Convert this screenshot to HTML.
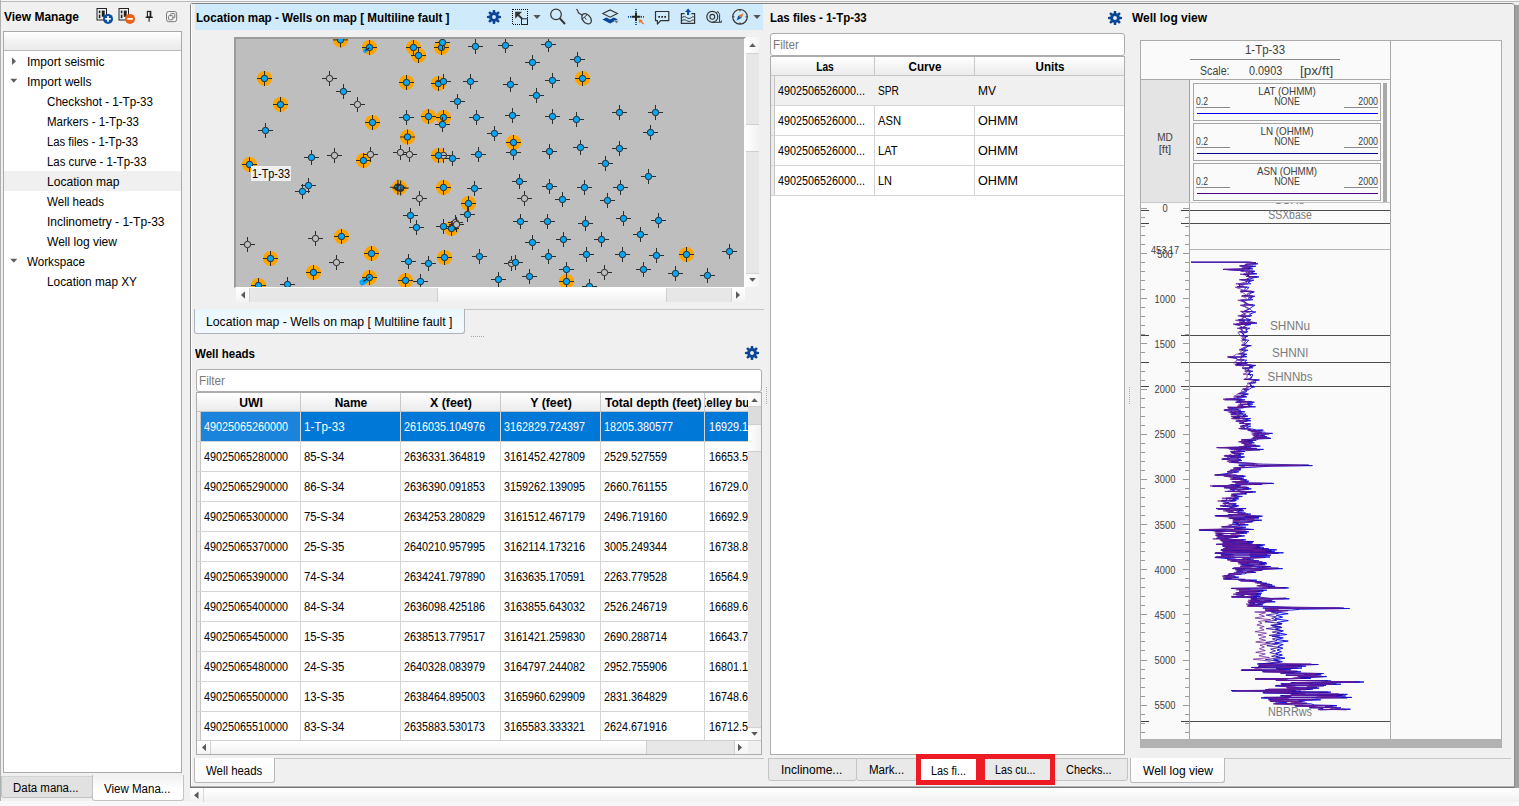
<!DOCTYPE html>
<html lang="en"><head><meta charset="utf-8"><title>View Manager</title>
<style>
html,body{margin:0;padding:0;}
body{width:1519px;height:806px;overflow:hidden;background:#f0f0f0;position:relative;
 font-family:"Liberation Sans",sans-serif;font-size:12px;color:#000;}
#root{position:absolute;left:0;top:0;width:1519px;height:806px;overflow:hidden;}
#root div,#root span.t,#root svg{position:absolute;box-sizing:border-box;}
span.t{white-space:pre;font-size:12px;}
.b{font-weight:bold;}
.s11{font-size:11px !important;}
.s10{font-size:10.5px !important;}
.w{color:#fff;}
.g{color:#7a7a7a;}
.dg{color:#404040;}
.clip{overflow:hidden;}
</style></head>
<body><div id="root">
<div style="left:0px;top:0px;width:1519px;height:1px;background:#f6f6f6;"></div>
<div style="left:0px;top:1px;width:1519px;height:1px;background:#b9b9b9;"></div>
<div style="left:0px;top:0px;width:1px;height:802px;background:#b0b0b0;"></div>
<span id="t1" class="t b" style="top:9px;line-height:16px;left:4px;transform-origin:0 50%;transform:scaleX(0.9981);">View Manage</span>
<div style="left:3px;top:31px;width:179px;height:742px;background:#fff;border:1px solid #a9a9a9;"></div>
<div style="left:4px;top:32px;width:177px;height:19px;background:linear-gradient(#fff,#f1f1f1 60%,#ebebeb);border-bottom:1px solid #b9b9b9;"></div>
<div style="left:4px;top:171px;width:177px;height:20px;background:#f0f0f0;"></div>
<span id="t2" class="t " style="top:54px;line-height:16px;left:27.3px;transform-origin:0 50%;transform:scaleX(1.0020);">Import seismic</span>
<span id="t3" class="t " style="top:74px;line-height:16px;left:27.3px;transform-origin:0 50%;transform:scaleX(1.0076);">Import wells</span>
<span id="t4" class="t " style="top:94px;line-height:16px;left:47.3px;transform-origin:0 50%;transform:scaleX(0.9690);">Checkshot - 1-Tp-33</span>
<span id="t5" class="t " style="top:114px;line-height:16px;left:47.3px;transform-origin:0 50%;transform:scaleX(0.9580);">Markers - 1-Tp-33</span>
<span id="t6" class="t " style="top:134px;line-height:16px;left:47.3px;transform-origin:0 50%;transform:scaleX(0.9410);">Las files - 1-Tp-33</span>
<span id="t7" class="t " style="top:154px;line-height:16px;left:47.3px;transform-origin:0 50%;transform:scaleX(0.9502);">Las curve - 1-Tp-33</span>
<span id="t8" class="t " style="top:174px;line-height:16px;left:47.3px;transform-origin:0 50%;transform:scaleX(1.0063);">Location map</span>
<span id="t9" class="t " style="top:194px;line-height:16px;left:47.3px;transform-origin:0 50%;transform:scaleX(0.9635);">Well heads</span>
<span id="t10" class="t " style="top:214px;line-height:16px;left:47.3px;transform-origin:0 50%;transform:scaleX(1.0011);">Inclinometry - 1-Tp-33</span>
<span id="t11" class="t " style="top:234px;line-height:16px;left:47.3px;transform-origin:0 50%;transform:scaleX(1.0027);">Well log view</span>
<span id="t12" class="t " style="top:254px;line-height:16px;left:27.3px;transform-origin:0 50%;transform:scaleX(0.9697);">Workspace</span>
<span id="t13" class="t " style="top:274px;line-height:16px;left:47.3px;transform-origin:0 50%;transform:scaleX(0.9848);">Location map XY</span>
<svg style="left:0;top:50px;width:30px;height:230px" viewBox="0 0 30 230"><path d="M12 7.5 L16 11.3 L12 15 Z" fill="#5f5f5f"/><path d="M10.3 28.8 L17.3 28.8 L13.8 32.8 Z" fill="#5f5f5f"/><path d="M10.3 208.8 L17.3 208.8 L13.8 212.8 Z" fill="#5f5f5f"/></svg>
<div style="left:1px;top:776px;width:92px;height:22px;background:#e1e1e1;border:1px solid #c3c3c3;border-top:1px solid #d2d2d2;border-radius:0 0 3px 3px;"></div>
<div style="left:92px;top:775px;width:92px;height:26px;background:linear-gradient(#f1f1f1,#fff 60%);border:1px solid #c3c3c3;border-top:none;border-radius:0 0 3px 3px;"></div>
<span id="t14" class="t " style="top:780px;line-height:16px;left:13.3px;transform-origin:0 50%;transform:scaleX(0.9534);">Data mana...</span>
<span id="t15" class="t " style="top:781px;line-height:16px;left:104.2px;transform-origin:0 50%;transform:scaleX(0.9616);">View Mana...</span>
<div style="left:0px;top:801px;width:1519px;height:5px;background:#f7f7f7;"></div>
<div style="left:190px;top:3px;width:1325px;height:785px;border:1px solid #858585;border-bottom:2px solid #757575;border-right:none;border-radius:3px 4px 0 0;"></div>
<div style="left:191px;top:4px;width:1px;height:782px;background:#fff;"></div>
<div style="left:1514px;top:5px;width:5px;height:783px;background:#a0a0a0;border-left:1px solid #8c8c8c;"></div>
<div style="left:191px;top:786px;width:1323px;height:1px;background:#b4b4b4;"></div>
<div style="left:190px;top:788px;width:1329px;height:14px;background:linear-gradient(#fefefe,#f8f8f8 50%,#f1f1f1);"></div>
<div style="left:203px;top:788px;width:1px;height:14px;background:#d9d9d9;"></div>
<svg style="left:191px;top:788px;width:12px;height:15px" viewBox="0 0 12 15"><path d="M7.5 3.5 L7.5 11 L3 7.2 Z" fill="#5a5a5a"/></svg>
<div style="left:195px;top:4px;width:568px;height:26px;background:#cfeafb;"></div>
<span id="t16" class="t b" style="top:10px;line-height:16px;left:195.6px;transform-origin:0 50%;transform:scaleX(0.9708);">Location map - Wells on map [ Multiline fault ]</span>
<svg style="left:484.7px;top:8.2px;width:18px;height:18px" viewBox="-9 -9 18 18"><g fill="#0b4596"><circle cx="0" cy="0" r="4.7"/><path d="M-1.5 -4 L-1.1 -7.05 L1.1 -7.05 L1.5 -4 Z" transform="rotate(0)"/><path d="M-1.5 -4 L-1.1 -7.05 L1.1 -7.05 L1.5 -4 Z" transform="rotate(45)"/><path d="M-1.5 -4 L-1.1 -7.05 L1.1 -7.05 L1.5 -4 Z" transform="rotate(90)"/><path d="M-1.5 -4 L-1.1 -7.05 L1.1 -7.05 L1.5 -4 Z" transform="rotate(135)"/><path d="M-1.5 -4 L-1.1 -7.05 L1.1 -7.05 L1.5 -4 Z" transform="rotate(180)"/><path d="M-1.5 -4 L-1.1 -7.05 L1.1 -7.05 L1.5 -4 Z" transform="rotate(225)"/><path d="M-1.5 -4 L-1.1 -7.05 L1.1 -7.05 L1.5 -4 Z" transform="rotate(270)"/><path d="M-1.5 -4 L-1.1 -7.05 L1.1 -7.05 L1.5 -4 Z" transform="rotate(315)"/></g><circle cx="0" cy="0" r="1.95" fill="#cfeafb"/></svg>
<svg style="left:94px;top:4px;width:90px;height:24px" viewBox="94 4 90 24" ><rect x="97.0" y="8.5" width="9.5" height="11.5" fill="#f0f0f0" stroke="#222" stroke-width="1"/><rect x="98.8" y="10.6" width="1.6" height="2.6" fill="#222"/><rect x="98.8" y="14.6" width="1.6" height="3.6" fill="#222"/><rect x="101.8" y="10.6" width="2.9" height="6.2" fill="#222"/><circle cx="108" cy="18.9" r="5" fill="#0a4ea0"/><path d="M105.2 18.9h5.6M108 16.1v5.6" stroke="#fff" stroke-width="1.7"/><rect x="119.0" y="8.5" width="9.5" height="11.5" fill="#f0f0f0" stroke="#222" stroke-width="1"/><rect x="120.8" y="10.6" width="1.6" height="2.6" fill="#222"/><rect x="120.8" y="14.6" width="1.6" height="3.6" fill="#222"/><rect x="123.8" y="10.6" width="2.9" height="6.2" fill="#222"/><circle cx="130" cy="18.9" r="5" fill="#e8601a"/><path d="M127.2 18.9h5.6" stroke="#fff" stroke-width="1.7"/><rect x="147.4" y="11.4" width="3.4" height="5.6" fill="#f0f0f0" stroke="#1a1a1a" stroke-width="1.1"/><rect x="149.6" y="11.4" width="1.4" height="5.6" fill="#1a1a1a"/><path d="M145.6 17.3h7.2" stroke="#1a1a1a" stroke-width="1.3"/><path d="M149.1 17.3v4.4" stroke="#1a1a1a" stroke-width="1.1"/><rect x="166.5" y="11.5" width="10.2" height="10.2" rx="2.2" fill="none" stroke="#7a7a7a" stroke-width="1"/><rect x="170.6" y="13.6" width="4.2" height="4.2" rx="0.8" fill="none" stroke="#7a7a7a" stroke-width="1"/><rect x="168.6" y="15.6" width="4.2" height="4.2" rx="0.8" fill="#f0f0f0" stroke="#7a7a7a" stroke-width="1"/></svg>
<svg style="left:505px;top:4px;width:258px;height:26px" viewBox="505 4 258 26" ><path d="M513 9.5H528M513 24.5H521M512.5 9V25M527.5 9V19" fill="none" stroke="#000" stroke-width="1" stroke-dasharray="1 1"/><path d="M515.2 11.8 L522 11.8 L515.2 18.7 Z" fill="#333"/><path d="M518.3 15 L522.3 19" stroke="#333" stroke-width="1.8"/><rect x="521.5" y="18.8" width="6" height="5.7" fill="#cfeafb" stroke="#222" stroke-width="1"/><path d="M533.3 15 L540.7 15 L537 18.9 Z" fill="#555"/><circle cx="556" cy="14.4" r="5.3" fill="none" stroke="#333" stroke-width="1.2"/><path d="M559.8 18.3 L565 24" stroke="#333" stroke-width="2"/><path d="M576.3 9.3 C578.8 9.6 577.2 12.6 579.2 13.4 C580.6 14 581.6 14.6 582.8 15.4" fill="none" stroke="#3c3c3c" stroke-width="1.2"/><ellipse cx="586.6" cy="18.8" rx="3.9" ry="5.8" transform="rotate(-40 586.6 18.8)" fill="none" stroke="#3c3c3c" stroke-width="1.3"/><path d="M581.6 19.4 L587.4 14.6 M584.4 17 L586.4 19.6" stroke="#3c3c3c" stroke-width="1" fill="none"/><path d="M602.4 19.5 L610.1 15.6 L617.8 19.5 L610.1 23.6 Z" fill="#0a4596"/><path d="M601.4 13.4 L610.1 9.2 L618.8 13.4 L610.1 18.2 Z" fill="#cfeafb" stroke="#cfeafb" stroke-width="2.2"/><path d="M602.8 13.4 L610.1 9.9 L617.4 13.4 L610.1 17.2 Z" fill="#cfeafb" stroke="#333" stroke-width="1.1"/><path d="M614 20.8 L618.8 20.8 L616.4 23.6 Z" fill="#666" stroke="#cfeafb" stroke-width="0.5"/><path d="M631.6 16.8H640.4M636 12.6V21" stroke="#222" stroke-width="2"/><path d="M628 16.8H631M641 16.8H644M636 9V12M636 22V25" stroke="#0b4fa8" stroke-width="1.8" stroke-dasharray="1 1"/><path d="M638.6 19.2 L642.8 19.9 L641.6 21.1 L644 23.5 L643 24.5 L640.6 22.1 L639.4 23.3 Z" fill="#f07020"/><path d="M655.5 11.5 H668.8 V20.6 H660.6 L657.4 24 V20.6 H655.5 Z" fill="none" stroke="#333" stroke-width="1.2" stroke-linejoin="round"/><rect x="658.3" y="16" width="1.7" height="1.7" fill="#222"/><rect x="661.3" y="16" width="1.7" height="1.7" fill="#222"/><rect x="664.3" y="16" width="1.7" height="1.7" fill="#222"/><path d="M684.6 13.6 H681.4 V23.4 H694.6 V13.6 H691.4" fill="none" stroke="#333" stroke-width="1.2"/><path d="M681.6 17.8 C683.6 16.2 685 16.4 686.6 17.6 C688.4 19 690.2 18.6 691.6 17.4 C692.8 16.4 693.8 16.8 694.6 17.4" fill="none" stroke="#333" stroke-width="1"/><path d="M681.6 20.8 C683.6 19.4 685 19.6 686.6 20.6 C688.4 21.8 690.2 21.6 691.6 20.6 C692.8 19.8 693.8 20 694.6 20.4" fill="none" stroke="#333" stroke-width="1"/><path d="M688.1 8.6 L691.2 12 H689.2 V15 H687 V12 H685 Z" fill="#0b4fa8"/><circle cx="712.3" cy="16.8" r="5.5" fill="none" stroke="#333" stroke-width="1.2"/><circle cx="712.3" cy="16.8" r="2.4" fill="none" stroke="#333" stroke-width="1.1"/><path d="M712.3 22.3 H721.4 V20.6 M716.4 12.4 L718 11.6 L719.6 14.4 V22" fill="none" stroke="#333" stroke-width="1"/><circle cx="740" cy="16.8" r="7.3" fill="none" stroke="#333" stroke-width="1.2"/><path d="M740 9.6v1.6M740 22.4v1.6M732.8 16.8h1.6M745.6 16.8h1.6" stroke="#333" stroke-width="1.1"/><path d="M743.4 13.2 L741.6 18.2 L738.6 15.6 Z" fill="#f07020"/><path d="M736.6 20.4 L738.4 15.4 L741.4 18 Z" fill="#0b4fa8"/><path d="M753.3 15 L760.7 15 L757 18.9 Z" fill="#555"/></svg>
<div style="left:234px;top:37px;width:512px;height:251px;background:#bebebe;border-left:2px solid #9b9b9b;border-top:2px solid #9b9b9b;border-right:2px solid #fff;border-bottom:1px solid #fff;"></div>
<svg style="left:236px;top:39px;width:508px;height:248px" viewBox="236 39 508 248"><circle cx="340.5" cy="39.9" r="7.6" fill="#ffa500"/><circle cx="413.5" cy="47.5" r="7.6" fill="#ffa500"/><circle cx="418.5" cy="55.5" r="7.6" fill="#ffa500"/><circle cx="264.5" cy="78.5" r="7.6" fill="#ffa500"/><circle cx="280.5" cy="104.5" r="7.6" fill="#ffa500"/><circle cx="406.5" cy="82.5" r="7.6" fill="#ffa500"/><circle cx="372.5" cy="122.5" r="7.6" fill="#ffa500"/><circle cx="428.5" cy="116.5" r="7.6" fill="#ffa500"/><circle cx="407.5" cy="137.0" r="7.6" fill="#ffa500"/><circle cx="441.5" cy="47.5" r="7.6" fill="#ffa500"/><circle cx="438.5" cy="83.5" r="7.6" fill="#ffa500"/><circle cx="582.5" cy="78.5" r="7.6" fill="#ffa500"/><circle cx="443.5" cy="117.5" r="7.6" fill="#ffa500"/><circle cx="513.5" cy="142.5" r="7.6" fill="#ffa500"/><circle cx="249.5" cy="164.5" r="7.6" fill="#ffa500"/><circle cx="363.5" cy="160.5" r="7.6" fill="#ffa500"/><circle cx="341.5" cy="236.5" r="7.6" fill="#ffa500"/><circle cx="438.5" cy="155.5" r="7.6" fill="#ffa500"/><circle cx="443.5" cy="187.5" r="7.6" fill="#ffa500"/><circle cx="468.5" cy="203.5" r="7.6" fill="#ffa500"/><circle cx="451.5" cy="228.5" r="7.6" fill="#ffa500"/><circle cx="270.5" cy="258.5" r="7.6" fill="#ffa500"/><circle cx="371.5" cy="253.5" r="7.6" fill="#ffa500"/><circle cx="313.5" cy="272.5" r="7.6" fill="#ffa500"/><circle cx="405.5" cy="280.5" r="7.6" fill="#ffa500"/><circle cx="258.5" cy="285.5" r="7.6" fill="#ffa500"/><circle cx="444.5" cy="257.5" r="7.6" fill="#ffa500"/><circle cx="566.5" cy="281.5" r="7.6" fill="#ffa500"/><circle cx="686.5" cy="254.5" r="7.6" fill="#ffa500"/><circle cx="369.5" cy="47.5" r="7.6" fill="#ffa500"/><circle cx="369.5" cy="277.5" r="7.6" fill="#ffa500"/><circle cx="399.5" cy="187.5" r="7.6" fill="#ffa500"/><g transform="translate(329.5 78.5)"><path d="M-7.5 0H7.5M0 -7.5V7.5" stroke="#2b2b2b" stroke-width="1" fill="none"/><circle r="3.2" fill="#bebebe" stroke="#2b2b2b" stroke-width="1"/></g><g transform="translate(357.5 104.5)"><path d="M-7.5 0H7.5M0 -7.5V7.5" stroke="#2b2b2b" stroke-width="1" fill="none"/><circle r="3.2" fill="#bebebe" stroke="#2b2b2b" stroke-width="1"/></g><g transform="translate(334.5 155.5)"><path d="M-7.5 0H7.5M0 -7.5V7.5" stroke="#2b2b2b" stroke-width="1" fill="none"/><circle r="3.2" fill="#bebebe" stroke="#2b2b2b" stroke-width="1"/></g><g transform="translate(370.5 154.5)"><path d="M-7.5 0H7.5M0 -7.5V7.5" stroke="#2b2b2b" stroke-width="1" fill="none"/><circle r="3.2" fill="#bebebe" stroke="#2b2b2b" stroke-width="1"/></g><g transform="translate(400.5 152.5)"><path d="M-7.5 0H7.5M0 -7.5V7.5" stroke="#2b2b2b" stroke-width="1" fill="none"/><circle r="3.2" fill="#bebebe" stroke="#2b2b2b" stroke-width="1"/></g><g transform="translate(409.5 154.5)"><path d="M-7.5 0H7.5M0 -7.5V7.5" stroke="#2b2b2b" stroke-width="1" fill="none"/><circle r="3.2" fill="#bebebe" stroke="#2b2b2b" stroke-width="1"/></g><g transform="translate(419.5 198.5)"><path d="M-7.5 0H7.5M0 -7.5V7.5" stroke="#2b2b2b" stroke-width="1" fill="none"/><circle r="3.2" fill="#bebebe" stroke="#2b2b2b" stroke-width="1"/></g><g transform="translate(315.5 238.5)"><path d="M-7.5 0H7.5M0 -7.5V7.5" stroke="#2b2b2b" stroke-width="1" fill="none"/><circle r="3.2" fill="#bebebe" stroke="#2b2b2b" stroke-width="1"/></g><g transform="translate(443.5 155.5)"><path d="M-7.5 0H7.5M0 -7.5V7.5" stroke="#2b2b2b" stroke-width="1" fill="none"/><circle r="3.2" fill="#bebebe" stroke="#2b2b2b" stroke-width="1"/></g><g transform="translate(524.5 198.5)"><path d="M-7.5 0H7.5M0 -7.5V7.5" stroke="#2b2b2b" stroke-width="1" fill="none"/><circle r="3.2" fill="#bebebe" stroke="#2b2b2b" stroke-width="1"/></g><g transform="translate(455.5 222.5)"><path d="M-7.5 0H7.5M0 -7.5V7.5" stroke="#2b2b2b" stroke-width="1" fill="none"/><circle r="3.2" fill="#bebebe" stroke="#2b2b2b" stroke-width="1"/></g><g transform="translate(456.5 224.5)"><path d="M-7.5 0H7.5M0 -7.5V7.5" stroke="#2b2b2b" stroke-width="1" fill="none"/><circle r="3.2" fill="#bebebe" stroke="#2b2b2b" stroke-width="1"/></g><g transform="translate(247.5 244.5)"><path d="M-7.5 0H7.5M0 -7.5V7.5" stroke="#2b2b2b" stroke-width="1" fill="none"/><circle r="3.2" fill="#bebebe" stroke="#2b2b2b" stroke-width="1"/></g><g transform="translate(336.5 262.5)"><path d="M-7.5 0H7.5M0 -7.5V7.5" stroke="#2b2b2b" stroke-width="1" fill="none"/><circle r="3.2" fill="#bebebe" stroke="#2b2b2b" stroke-width="1"/></g><g transform="translate(511.5 263.5)"><path d="M-7.5 0H7.5M0 -7.5V7.5" stroke="#2b2b2b" stroke-width="1" fill="none"/><circle r="3.2" fill="#bebebe" stroke="#2b2b2b" stroke-width="1"/></g><g transform="translate(604.5 272.5)"><path d="M-7.5 0H7.5M0 -7.5V7.5" stroke="#2b2b2b" stroke-width="1" fill="none"/><circle r="3.2" fill="#bebebe" stroke="#2b2b2b" stroke-width="1"/></g><g transform="translate(340.5 39.9)"><path d="M-7.5 0H7.5M0 -7.5V7.5" stroke="#2b2b2b" stroke-width="1" fill="none"/><circle r="3.2" fill="#05a8f8" stroke="#2b2b2b" stroke-width="1"/></g><g transform="translate(413.5 47.5)"><path d="M-7.5 0H7.5M0 -7.5V7.5" stroke="#2b2b2b" stroke-width="1" fill="none"/><circle r="3.2" fill="#05a8f8" stroke="#2b2b2b" stroke-width="1"/></g><g transform="translate(418.5 55.5)"><path d="M-7.5 0H7.5M0 -7.5V7.5" stroke="#2b2b2b" stroke-width="1" fill="none"/><circle r="3.2" fill="#05a8f8" stroke="#2b2b2b" stroke-width="1"/></g><g transform="translate(264.5 78.5)"><path d="M-7.5 0H7.5M0 -7.5V7.5" stroke="#2b2b2b" stroke-width="1" fill="none"/><circle r="3.2" fill="#05a8f8" stroke="#2b2b2b" stroke-width="1"/></g><g transform="translate(280.5 104.5)"><path d="M-7.5 0H7.5M0 -7.5V7.5" stroke="#2b2b2b" stroke-width="1" fill="none"/><circle r="3.2" fill="#05a8f8" stroke="#2b2b2b" stroke-width="1"/></g><g transform="translate(406.5 82.5)"><path d="M-7.5 0H7.5M0 -7.5V7.5" stroke="#2b2b2b" stroke-width="1" fill="none"/><circle r="3.2" fill="#05a8f8" stroke="#2b2b2b" stroke-width="1"/></g><g transform="translate(372.5 122.5)"><path d="M-7.5 0H7.5M0 -7.5V7.5" stroke="#2b2b2b" stroke-width="1" fill="none"/><circle r="3.2" fill="#05a8f8" stroke="#2b2b2b" stroke-width="1"/></g><g transform="translate(428.5 116.5)"><path d="M-7.5 0H7.5M0 -7.5V7.5" stroke="#2b2b2b" stroke-width="1" fill="none"/><circle r="3.2" fill="#05a8f8" stroke="#2b2b2b" stroke-width="1"/></g><g transform="translate(407.5 137.0)"><path d="M-7.5 0H7.5M0 -7.5V7.5" stroke="#2b2b2b" stroke-width="1" fill="none"/><circle r="3.2" fill="#05a8f8" stroke="#2b2b2b" stroke-width="1"/></g><g transform="translate(441.5 47.5)"><path d="M-7.5 0H7.5M0 -7.5V7.5" stroke="#2b2b2b" stroke-width="1" fill="none"/><circle r="3.2" fill="#05a8f8" stroke="#2b2b2b" stroke-width="1"/></g><g transform="translate(438.5 83.5)"><path d="M-7.5 0H7.5M0 -7.5V7.5" stroke="#2b2b2b" stroke-width="1" fill="none"/><circle r="3.2" fill="#05a8f8" stroke="#2b2b2b" stroke-width="1"/></g><g transform="translate(582.5 78.5)"><path d="M-7.5 0H7.5M0 -7.5V7.5" stroke="#2b2b2b" stroke-width="1" fill="none"/><circle r="3.2" fill="#05a8f8" stroke="#2b2b2b" stroke-width="1"/></g><g transform="translate(443.5 117.5)"><path d="M-7.5 0H7.5M0 -7.5V7.5" stroke="#2b2b2b" stroke-width="1" fill="none"/><circle r="3.2" fill="#05a8f8" stroke="#2b2b2b" stroke-width="1"/></g><g transform="translate(513.5 142.5)"><path d="M-7.5 0H7.5M0 -7.5V7.5" stroke="#2b2b2b" stroke-width="1" fill="none"/><circle r="3.2" fill="#05a8f8" stroke="#2b2b2b" stroke-width="1"/></g><g transform="translate(249.5 164.5)"><path d="M-7.5 0H7.5M0 -7.5V7.5" stroke="#2b2b2b" stroke-width="1" fill="none"/><circle r="3.2" fill="#05a8f8" stroke="#2b2b2b" stroke-width="1"/></g><g transform="translate(363.5 160.5)"><path d="M-7.5 0H7.5M0 -7.5V7.5" stroke="#2b2b2b" stroke-width="1" fill="none"/><circle r="3.2" fill="#05a8f8" stroke="#2b2b2b" stroke-width="1"/></g><g transform="translate(341.5 236.5)"><path d="M-7.5 0H7.5M0 -7.5V7.5" stroke="#2b2b2b" stroke-width="1" fill="none"/><circle r="3.2" fill="#05a8f8" stroke="#2b2b2b" stroke-width="1"/></g><g transform="translate(438.5 155.5)"><path d="M-7.5 0H7.5M0 -7.5V7.5" stroke="#2b2b2b" stroke-width="1" fill="none"/><circle r="3.2" fill="#05a8f8" stroke="#2b2b2b" stroke-width="1"/></g><g transform="translate(443.5 187.5)"><path d="M-7.5 0H7.5M0 -7.5V7.5" stroke="#2b2b2b" stroke-width="1" fill="none"/><circle r="3.2" fill="#05a8f8" stroke="#2b2b2b" stroke-width="1"/></g><g transform="translate(468.5 203.5)"><path d="M-7.5 0H7.5M0 -7.5V7.5" stroke="#2b2b2b" stroke-width="1" fill="none"/><circle r="3.2" fill="#05a8f8" stroke="#2b2b2b" stroke-width="1"/></g><g transform="translate(451.5 228.5)"><path d="M-7.5 0H7.5M0 -7.5V7.5" stroke="#2b2b2b" stroke-width="1" fill="none"/><circle r="3.2" fill="#05a8f8" stroke="#2b2b2b" stroke-width="1"/></g><g transform="translate(270.5 258.5)"><path d="M-7.5 0H7.5M0 -7.5V7.5" stroke="#2b2b2b" stroke-width="1" fill="none"/><circle r="3.2" fill="#05a8f8" stroke="#2b2b2b" stroke-width="1"/></g><g transform="translate(371.5 253.5)"><path d="M-7.5 0H7.5M0 -7.5V7.5" stroke="#2b2b2b" stroke-width="1" fill="none"/><circle r="3.2" fill="#05a8f8" stroke="#2b2b2b" stroke-width="1"/></g><g transform="translate(313.5 272.5)"><path d="M-7.5 0H7.5M0 -7.5V7.5" stroke="#2b2b2b" stroke-width="1" fill="none"/><circle r="3.2" fill="#05a8f8" stroke="#2b2b2b" stroke-width="1"/></g><g transform="translate(405.5 280.5)"><path d="M-7.5 0H7.5M0 -7.5V7.5" stroke="#2b2b2b" stroke-width="1" fill="none"/><circle r="3.2" fill="#05a8f8" stroke="#2b2b2b" stroke-width="1"/></g><g transform="translate(258.5 285.5)"><path d="M-7.5 0H7.5M0 -7.5V7.5" stroke="#2b2b2b" stroke-width="1" fill="none"/><circle r="3.2" fill="#05a8f8" stroke="#2b2b2b" stroke-width="1"/></g><g transform="translate(444.5 257.5)"><path d="M-7.5 0H7.5M0 -7.5V7.5" stroke="#2b2b2b" stroke-width="1" fill="none"/><circle r="3.2" fill="#05a8f8" stroke="#2b2b2b" stroke-width="1"/></g><g transform="translate(566.5 281.5)"><path d="M-7.5 0H7.5M0 -7.5V7.5" stroke="#2b2b2b" stroke-width="1" fill="none"/><circle r="3.2" fill="#05a8f8" stroke="#2b2b2b" stroke-width="1"/></g><g transform="translate(686.5 254.5)"><path d="M-7.5 0H7.5M0 -7.5V7.5" stroke="#2b2b2b" stroke-width="1" fill="none"/><circle r="3.2" fill="#05a8f8" stroke="#2b2b2b" stroke-width="1"/></g><g transform="translate(343.5 91.5)"><path d="M-7.5 0H7.5M0 -7.5V7.5" stroke="#2b2b2b" stroke-width="1" fill="none"/><circle r="3.2" fill="#05a8f8" stroke="#2b2b2b" stroke-width="1"/></g><g transform="translate(406.5 117.5)"><path d="M-7.5 0H7.5M0 -7.5V7.5" stroke="#2b2b2b" stroke-width="1" fill="none"/><circle r="3.2" fill="#05a8f8" stroke="#2b2b2b" stroke-width="1"/></g><g transform="translate(265.5 130.5)"><path d="M-7.5 0H7.5M0 -7.5V7.5" stroke="#2b2b2b" stroke-width="1" fill="none"/><circle r="3.2" fill="#05a8f8" stroke="#2b2b2b" stroke-width="1"/></g><g transform="translate(442.5 42.5)"><path d="M-7.5 0H7.5M0 -7.5V7.5" stroke="#2b2b2b" stroke-width="1" fill="none"/><circle r="3.2" fill="#05a8f8" stroke="#2b2b2b" stroke-width="1"/></g><g transform="translate(475.5 46.5)"><path d="M-7.5 0H7.5M0 -7.5V7.5" stroke="#2b2b2b" stroke-width="1" fill="none"/><circle r="3.2" fill="#05a8f8" stroke="#2b2b2b" stroke-width="1"/></g><g transform="translate(505.5 45.5)"><path d="M-7.5 0H7.5M0 -7.5V7.5" stroke="#2b2b2b" stroke-width="1" fill="none"/><circle r="3.2" fill="#05a8f8" stroke="#2b2b2b" stroke-width="1"/></g><g transform="translate(548.5 44.5)"><path d="M-7.5 0H7.5M0 -7.5V7.5" stroke="#2b2b2b" stroke-width="1" fill="none"/><circle r="3.2" fill="#05a8f8" stroke="#2b2b2b" stroke-width="1"/></g><g transform="translate(532.5 62.5)"><path d="M-7.5 0H7.5M0 -7.5V7.5" stroke="#2b2b2b" stroke-width="1" fill="none"/><circle r="3.2" fill="#05a8f8" stroke="#2b2b2b" stroke-width="1"/></g><g transform="translate(577.5 59.5)"><path d="M-7.5 0H7.5M0 -7.5V7.5" stroke="#2b2b2b" stroke-width="1" fill="none"/><circle r="3.2" fill="#05a8f8" stroke="#2b2b2b" stroke-width="1"/></g><g transform="translate(443.5 81.5)"><path d="M-7.5 0H7.5M0 -7.5V7.5" stroke="#2b2b2b" stroke-width="1" fill="none"/><circle r="3.2" fill="#05a8f8" stroke="#2b2b2b" stroke-width="1"/></g><g transform="translate(470.5 81.5)"><path d="M-7.5 0H7.5M0 -7.5V7.5" stroke="#2b2b2b" stroke-width="1" fill="none"/><circle r="3.2" fill="#05a8f8" stroke="#2b2b2b" stroke-width="1"/></g><g transform="translate(510.5 84.5)"><path d="M-7.5 0H7.5M0 -7.5V7.5" stroke="#2b2b2b" stroke-width="1" fill="none"/><circle r="3.2" fill="#05a8f8" stroke="#2b2b2b" stroke-width="1"/></g><g transform="translate(552.5 80.5)"><path d="M-7.5 0H7.5M0 -7.5V7.5" stroke="#2b2b2b" stroke-width="1" fill="none"/><circle r="3.2" fill="#05a8f8" stroke="#2b2b2b" stroke-width="1"/></g><g transform="translate(536.5 95.5)"><path d="M-7.5 0H7.5M0 -7.5V7.5" stroke="#2b2b2b" stroke-width="1" fill="none"/><circle r="3.2" fill="#05a8f8" stroke="#2b2b2b" stroke-width="1"/></g><g transform="translate(457.5 101.5)"><path d="M-7.5 0H7.5M0 -7.5V7.5" stroke="#2b2b2b" stroke-width="1" fill="none"/><circle r="3.2" fill="#05a8f8" stroke="#2b2b2b" stroke-width="1"/></g><g transform="translate(442.5 124.5)"><path d="M-7.5 0H7.5M0 -7.5V7.5" stroke="#2b2b2b" stroke-width="1" fill="none"/><circle r="3.2" fill="#05a8f8" stroke="#2b2b2b" stroke-width="1"/></g><g transform="translate(476.5 117.5)"><path d="M-7.5 0H7.5M0 -7.5V7.5" stroke="#2b2b2b" stroke-width="1" fill="none"/><circle r="3.2" fill="#05a8f8" stroke="#2b2b2b" stroke-width="1"/></g><g transform="translate(512.5 115.5)"><path d="M-7.5 0H7.5M0 -7.5V7.5" stroke="#2b2b2b" stroke-width="1" fill="none"/><circle r="3.2" fill="#05a8f8" stroke="#2b2b2b" stroke-width="1"/></g><g transform="translate(552.5 116.5)"><path d="M-7.5 0H7.5M0 -7.5V7.5" stroke="#2b2b2b" stroke-width="1" fill="none"/><circle r="3.2" fill="#05a8f8" stroke="#2b2b2b" stroke-width="1"/></g><g transform="translate(576.5 119.5)"><path d="M-7.5 0H7.5M0 -7.5V7.5" stroke="#2b2b2b" stroke-width="1" fill="none"/><circle r="3.2" fill="#05a8f8" stroke="#2b2b2b" stroke-width="1"/></g><g transform="translate(619.5 112.5)"><path d="M-7.5 0H7.5M0 -7.5V7.5" stroke="#2b2b2b" stroke-width="1" fill="none"/><circle r="3.2" fill="#05a8f8" stroke="#2b2b2b" stroke-width="1"/></g><g transform="translate(494.5 133.5)"><path d="M-7.5 0H7.5M0 -7.5V7.5" stroke="#2b2b2b" stroke-width="1" fill="none"/><circle r="3.2" fill="#05a8f8" stroke="#2b2b2b" stroke-width="1"/></g><g transform="translate(655.5 112.5)"><path d="M-7.5 0H7.5M0 -7.5V7.5" stroke="#2b2b2b" stroke-width="1" fill="none"/><circle r="3.2" fill="#05a8f8" stroke="#2b2b2b" stroke-width="1"/></g><g transform="translate(650.5 132.5)"><path d="M-7.5 0H7.5M0 -7.5V7.5" stroke="#2b2b2b" stroke-width="1" fill="none"/><circle r="3.2" fill="#05a8f8" stroke="#2b2b2b" stroke-width="1"/></g><g transform="translate(513.5 152.5)"><path d="M-7.5 0H7.5M0 -7.5V7.5" stroke="#2b2b2b" stroke-width="1" fill="none"/><circle r="3.2" fill="#05a8f8" stroke="#2b2b2b" stroke-width="1"/></g><g transform="translate(311.5 157.5)"><path d="M-7.5 0H7.5M0 -7.5V7.5" stroke="#2b2b2b" stroke-width="1" fill="none"/><circle r="3.2" fill="#05a8f8" stroke="#2b2b2b" stroke-width="1"/></g><g transform="translate(308.5 185.5)"><path d="M-7.5 0H7.5M0 -7.5V7.5" stroke="#2b2b2b" stroke-width="1" fill="none"/><circle r="3.2" fill="#05a8f8" stroke="#2b2b2b" stroke-width="1"/></g><g transform="translate(302.5 191.5)"><path d="M-7.5 0H7.5M0 -7.5V7.5" stroke="#2b2b2b" stroke-width="1" fill="none"/><circle r="3.2" fill="#05a8f8" stroke="#2b2b2b" stroke-width="1"/></g><g transform="translate(410.5 215.5)"><path d="M-7.5 0H7.5M0 -7.5V7.5" stroke="#2b2b2b" stroke-width="1" fill="none"/><circle r="3.2" fill="#05a8f8" stroke="#2b2b2b" stroke-width="1"/></g><g transform="translate(416.5 227.5)"><path d="M-7.5 0H7.5M0 -7.5V7.5" stroke="#2b2b2b" stroke-width="1" fill="none"/><circle r="3.2" fill="#05a8f8" stroke="#2b2b2b" stroke-width="1"/></g><g transform="translate(452.5 158.5)"><path d="M-7.5 0H7.5M0 -7.5V7.5" stroke="#2b2b2b" stroke-width="1" fill="none"/><circle r="3.2" fill="#05a8f8" stroke="#2b2b2b" stroke-width="1"/></g><g transform="translate(478.5 154.5)"><path d="M-7.5 0H7.5M0 -7.5V7.5" stroke="#2b2b2b" stroke-width="1" fill="none"/><circle r="3.2" fill="#05a8f8" stroke="#2b2b2b" stroke-width="1"/></g><g transform="translate(549.5 151.5)"><path d="M-7.5 0H7.5M0 -7.5V7.5" stroke="#2b2b2b" stroke-width="1" fill="none"/><circle r="3.2" fill="#05a8f8" stroke="#2b2b2b" stroke-width="1"/></g><g transform="translate(580.5 147.5)"><path d="M-7.5 0H7.5M0 -7.5V7.5" stroke="#2b2b2b" stroke-width="1" fill="none"/><circle r="3.2" fill="#05a8f8" stroke="#2b2b2b" stroke-width="1"/></g><g transform="translate(619.5 148.5)"><path d="M-7.5 0H7.5M0 -7.5V7.5" stroke="#2b2b2b" stroke-width="1" fill="none"/><circle r="3.2" fill="#05a8f8" stroke="#2b2b2b" stroke-width="1"/></g><g transform="translate(605.5 163.5)"><path d="M-7.5 0H7.5M0 -7.5V7.5" stroke="#2b2b2b" stroke-width="1" fill="none"/><circle r="3.2" fill="#05a8f8" stroke="#2b2b2b" stroke-width="1"/></g><g transform="translate(519.5 181.5)"><path d="M-7.5 0H7.5M0 -7.5V7.5" stroke="#2b2b2b" stroke-width="1" fill="none"/><circle r="3.2" fill="#05a8f8" stroke="#2b2b2b" stroke-width="1"/></g><g transform="translate(549.5 186.5)"><path d="M-7.5 0H7.5M0 -7.5V7.5" stroke="#2b2b2b" stroke-width="1" fill="none"/><circle r="3.2" fill="#05a8f8" stroke="#2b2b2b" stroke-width="1"/></g><g transform="translate(584.5 187.5)"><path d="M-7.5 0H7.5M0 -7.5V7.5" stroke="#2b2b2b" stroke-width="1" fill="none"/><circle r="3.2" fill="#05a8f8" stroke="#2b2b2b" stroke-width="1"/></g><g transform="translate(620.5 187.5)"><path d="M-7.5 0H7.5M0 -7.5V7.5" stroke="#2b2b2b" stroke-width="1" fill="none"/><circle r="3.2" fill="#05a8f8" stroke="#2b2b2b" stroke-width="1"/></g><g transform="translate(474.5 188.5)"><path d="M-7.5 0H7.5M0 -7.5V7.5" stroke="#2b2b2b" stroke-width="1" fill="none"/><circle r="3.2" fill="#05a8f8" stroke="#2b2b2b" stroke-width="1"/></g><g transform="translate(562.5 199.5)"><path d="M-7.5 0H7.5M0 -7.5V7.5" stroke="#2b2b2b" stroke-width="1" fill="none"/><circle r="3.2" fill="#05a8f8" stroke="#2b2b2b" stroke-width="1"/></g><g transform="translate(607.5 200.5)"><path d="M-7.5 0H7.5M0 -7.5V7.5" stroke="#2b2b2b" stroke-width="1" fill="none"/><circle r="3.2" fill="#05a8f8" stroke="#2b2b2b" stroke-width="1"/></g><g transform="translate(467.5 214.5)"><path d="M-7.5 0H7.5M0 -7.5V7.5" stroke="#2b2b2b" stroke-width="1" fill="none"/><circle r="3.2" fill="#05a8f8" stroke="#2b2b2b" stroke-width="1"/></g><g transform="translate(520.5 221.5)"><path d="M-7.5 0H7.5M0 -7.5V7.5" stroke="#2b2b2b" stroke-width="1" fill="none"/><circle r="3.2" fill="#05a8f8" stroke="#2b2b2b" stroke-width="1"/></g><g transform="translate(547.5 221.5)"><path d="M-7.5 0H7.5M0 -7.5V7.5" stroke="#2b2b2b" stroke-width="1" fill="none"/><circle r="3.2" fill="#05a8f8" stroke="#2b2b2b" stroke-width="1"/></g><g transform="translate(585.5 223.5)"><path d="M-7.5 0H7.5M0 -7.5V7.5" stroke="#2b2b2b" stroke-width="1" fill="none"/><circle r="3.2" fill="#05a8f8" stroke="#2b2b2b" stroke-width="1"/></g><g transform="translate(623.5 218.5)"><path d="M-7.5 0H7.5M0 -7.5V7.5" stroke="#2b2b2b" stroke-width="1" fill="none"/><circle r="3.2" fill="#05a8f8" stroke="#2b2b2b" stroke-width="1"/></g><g transform="translate(443.5 226.5)"><path d="M-7.5 0H7.5M0 -7.5V7.5" stroke="#2b2b2b" stroke-width="1" fill="none"/><circle r="3.2" fill="#05a8f8" stroke="#2b2b2b" stroke-width="1"/></g><g transform="translate(648.5 176.5)"><path d="M-7.5 0H7.5M0 -7.5V7.5" stroke="#2b2b2b" stroke-width="1" fill="none"/><circle r="3.2" fill="#05a8f8" stroke="#2b2b2b" stroke-width="1"/></g><g transform="translate(658.5 220.5)"><path d="M-7.5 0H7.5M0 -7.5V7.5" stroke="#2b2b2b" stroke-width="1" fill="none"/><circle r="3.2" fill="#05a8f8" stroke="#2b2b2b" stroke-width="1"/></g><g transform="translate(640.5 234.5)"><path d="M-7.5 0H7.5M0 -7.5V7.5" stroke="#2b2b2b" stroke-width="1" fill="none"/><circle r="3.2" fill="#05a8f8" stroke="#2b2b2b" stroke-width="1"/></g><g transform="translate(408.5 261.5)"><path d="M-7.5 0H7.5M0 -7.5V7.5" stroke="#2b2b2b" stroke-width="1" fill="none"/><circle r="3.2" fill="#05a8f8" stroke="#2b2b2b" stroke-width="1"/></g><g transform="translate(428.5 263.5)"><path d="M-7.5 0H7.5M0 -7.5V7.5" stroke="#2b2b2b" stroke-width="1" fill="none"/><circle r="3.2" fill="#05a8f8" stroke="#2b2b2b" stroke-width="1"/></g><g transform="translate(420.5 281.5)"><path d="M-7.5 0H7.5M0 -7.5V7.5" stroke="#2b2b2b" stroke-width="1" fill="none"/><circle r="3.2" fill="#05a8f8" stroke="#2b2b2b" stroke-width="1"/></g><g transform="translate(287.5 284.5)"><path d="M-7.5 0H7.5M0 -7.5V7.5" stroke="#2b2b2b" stroke-width="1" fill="none"/><circle r="3.2" fill="#05a8f8" stroke="#2b2b2b" stroke-width="1"/></g><g transform="translate(532.5 242.5)"><path d="M-7.5 0H7.5M0 -7.5V7.5" stroke="#2b2b2b" stroke-width="1" fill="none"/><circle r="3.2" fill="#05a8f8" stroke="#2b2b2b" stroke-width="1"/></g><g transform="translate(563.5 239.5)"><path d="M-7.5 0H7.5M0 -7.5V7.5" stroke="#2b2b2b" stroke-width="1" fill="none"/><circle r="3.2" fill="#05a8f8" stroke="#2b2b2b" stroke-width="1"/></g><g transform="translate(601.5 239.5)"><path d="M-7.5 0H7.5M0 -7.5V7.5" stroke="#2b2b2b" stroke-width="1" fill="none"/><circle r="3.2" fill="#05a8f8" stroke="#2b2b2b" stroke-width="1"/></g><g transform="translate(479.5 256.5)"><path d="M-7.5 0H7.5M0 -7.5V7.5" stroke="#2b2b2b" stroke-width="1" fill="none"/><circle r="3.2" fill="#05a8f8" stroke="#2b2b2b" stroke-width="1"/></g><g transform="translate(515.5 262.5)"><path d="M-7.5 0H7.5M0 -7.5V7.5" stroke="#2b2b2b" stroke-width="1" fill="none"/><circle r="3.2" fill="#05a8f8" stroke="#2b2b2b" stroke-width="1"/></g><g transform="translate(548.5 256.5)"><path d="M-7.5 0H7.5M0 -7.5V7.5" stroke="#2b2b2b" stroke-width="1" fill="none"/><circle r="3.2" fill="#05a8f8" stroke="#2b2b2b" stroke-width="1"/></g><g transform="translate(586.5 254.5)"><path d="M-7.5 0H7.5M0 -7.5V7.5" stroke="#2b2b2b" stroke-width="1" fill="none"/><circle r="3.2" fill="#05a8f8" stroke="#2b2b2b" stroke-width="1"/></g><g transform="translate(622.5 254.5)"><path d="M-7.5 0H7.5M0 -7.5V7.5" stroke="#2b2b2b" stroke-width="1" fill="none"/><circle r="3.2" fill="#05a8f8" stroke="#2b2b2b" stroke-width="1"/></g><g transform="translate(566.5 269.5)"><path d="M-7.5 0H7.5M0 -7.5V7.5" stroke="#2b2b2b" stroke-width="1" fill="none"/><circle r="3.2" fill="#05a8f8" stroke="#2b2b2b" stroke-width="1"/></g><g transform="translate(529.5 276.5)"><path d="M-7.5 0H7.5M0 -7.5V7.5" stroke="#2b2b2b" stroke-width="1" fill="none"/><circle r="3.2" fill="#05a8f8" stroke="#2b2b2b" stroke-width="1"/></g><g transform="translate(498.5 279.5)"><path d="M-7.5 0H7.5M0 -7.5V7.5" stroke="#2b2b2b" stroke-width="1" fill="none"/><circle r="3.2" fill="#05a8f8" stroke="#2b2b2b" stroke-width="1"/></g><g transform="translate(589.5 286.5)"><path d="M-7.5 0H7.5M0 -7.5V7.5" stroke="#2b2b2b" stroke-width="1" fill="none"/><circle r="3.2" fill="#05a8f8" stroke="#2b2b2b" stroke-width="1"/></g><g transform="translate(656.5 255.5)"><path d="M-7.5 0H7.5M0 -7.5V7.5" stroke="#2b2b2b" stroke-width="1" fill="none"/><circle r="3.2" fill="#05a8f8" stroke="#2b2b2b" stroke-width="1"/></g><g transform="translate(729.5 251.5)"><path d="M-7.5 0H7.5M0 -7.5V7.5" stroke="#2b2b2b" stroke-width="1" fill="none"/><circle r="3.2" fill="#05a8f8" stroke="#2b2b2b" stroke-width="1"/></g><g transform="translate(643.5 269.5)"><path d="M-7.5 0H7.5M0 -7.5V7.5" stroke="#2b2b2b" stroke-width="1" fill="none"/><circle r="3.2" fill="#05a8f8" stroke="#2b2b2b" stroke-width="1"/></g><g transform="translate(675.5 273.5)"><path d="M-7.5 0H7.5M0 -7.5V7.5" stroke="#2b2b2b" stroke-width="1" fill="none"/><circle r="3.2" fill="#05a8f8" stroke="#2b2b2b" stroke-width="1"/></g><g transform="translate(707.5 275.5)"><path d="M-7.5 0H7.5M0 -7.5V7.5" stroke="#2b2b2b" stroke-width="1" fill="none"/><circle r="3.2" fill="#05a8f8" stroke="#2b2b2b" stroke-width="1"/></g><path d="M366.7 49.5 L365.1 50.7" stroke="#05a8f8" stroke-width="4.2" stroke-linecap="round"/><g transform="translate(369.5 47.5)"><path d="M-7.5 0H7.5M0 -7.5V7.5" stroke="#2b2b2b" stroke-width="1" fill="none"/><circle r="3.2" fill="#05a8f8" stroke="#2b2b2b" stroke-width="1"/></g><path d="M369.8 47.6 L365.2 50.6" stroke="#111" stroke-width="1.1"/><path d="M365.9 280.1 L362.5 282.3" stroke="#05a8f8" stroke-width="6" stroke-linecap="round"/><g transform="translate(369.5 277.5)"><path d="M-7.5 0H7.5M0 -7.5V7.5" stroke="#2b2b2b" stroke-width="1" fill="none"/><circle r="3.2" fill="#05a8f8" stroke="#2b2b2b" stroke-width="1"/></g><path d="M370.0 277.3 h-1.6 M367.7 278.7 L363.3 281.4" stroke="#111" stroke-width="1.1"/><g transform="translate(397.9 187.2)"><path d="M-8 0H8M0 -7.5V7.5" stroke="#2b2b2b" stroke-width="1.1"/><circle r="3.4" fill="#333" stroke="#2b2b2b"/></g><g transform="translate(400.6 188.1)"><path d="M-8 0H8M0 -7.5V7.5" stroke="#2b2b2b" stroke-width="1.1"/><circle r="3.4" fill="#333" stroke="#2b2b2b"/></g><path d="M399.9 185.9 L398.9 189.3" stroke="#05a8f8" stroke-width="1.6"/><rect x="395.2" y="185.8" width="1.4" height="1.4" fill="#05a8f8"/><rect x="401.4" y="185.6" width="1.3" height="1.3" fill="#05a8f8"/><rect x="401.4" y="187.7" width="1.3" height="1.3" fill="#05a8f8"/></svg>
<div style="left:251px;top:166px;width:40px;height:15px;background:#f0f0f0;"></div>
<span id="t17" class="t " style="top:166px;line-height:16px;left:252px;transform-origin:0 50%;transform:scaleX(0.9041);">1-Tp-33</span>
<div style="left:746px;top:37px;width:13px;height:250px;background:#e7e7e7;"></div>
<div style="left:746px;top:37px;width:13px;height:16.5px;background:linear-gradient(90deg,#fff,#f4f4f4);border-bottom:1px solid #d2d2d2;"></div>
<div style="left:746px;top:273px;width:13px;height:14px;background:linear-gradient(90deg,#fff,#f4f4f4);border-top:1px solid #d2d2d2;"></div>
<div style="left:746px;top:124px;width:13px;height:27.5px;background:linear-gradient(90deg,#fff,#f1f1f1);border-top:1px solid #cfcfcf;border-bottom:1px solid #cfcfcf;"></div>
<svg style="left:746px;top:37px;width:13px;height:250px" viewBox="0 0 13 250"><path d="M3.2 10 L9.8 10 L6.5 6.2 Z" fill="#5a5a5a"/><path d="M3.2 241 L9.8 241 L6.5 244.8 Z" fill="#5a5a5a"/></svg>
<div style="left:236px;top:288px;width:509px;height:14px;background:#e7e7e7;"></div>
<div style="left:236px;top:288px;width:13.5px;height:14px;background:linear-gradient(#fff,#f4f4f4);border-right:1px solid #d2d2d2;"></div>
<div style="left:730.5px;top:288px;width:14.5px;height:14px;background:linear-gradient(#fff,#f4f4f4);border-left:1px solid #d2d2d2;"></div>
<div style="left:436.5px;top:288px;width:230.5px;height:14px;background:linear-gradient(#fff,#f1f1f1);border-left:1px solid #cfcfcf;border-right:1px solid #cfcfcf;"></div>
<svg style="left:236px;top:288px;width:509px;height:14px" viewBox="0 0 509 14"><path d="M9 3.3 L9 10.7 L5 7 Z" fill="#5a5a5a"/><path d="M500 3.3 L500 10.7 L504 7 Z" fill="#5a5a5a"/></svg>
<div style="left:194px;top:309px;width:570px;height:1px;background:#c6c6c6;"></div>
<div style="left:194px;top:309px;width:271px;height:25px;background:linear-gradient(#eaf6fe,#f4faff);border:1px solid #aeb4b9;border-top:none;border-radius:0 0 3px 3px;"></div>
<span id="t18" class="t " style="top:314px;line-height:16px;left:206.3px;transform-origin:0 50%;transform:scaleX(1.0191);">Location map - Wells on map [ Multiline fault ]</span>
<svg style="left:466px;top:335px;width:22px;height:4px" viewBox="0 0 22 4"><rect x="5" y="1" width="1" height="1" fill="#a9a9a9"/><rect x="7" y="1" width="1" height="1" fill="#a9a9a9"/><rect x="9" y="1" width="1" height="1" fill="#a9a9a9"/><rect x="11" y="1" width="1" height="1" fill="#a9a9a9"/><rect x="13" y="1" width="1" height="1" fill="#a9a9a9"/><rect x="15" y="1" width="1" height="1" fill="#a9a9a9"/><rect x="17" y="1" width="1" height="1" fill="#a9a9a9"/></svg>
<span id="t19" class="t b" style="top:346px;line-height:16px;left:195.3px;transform-origin:0 50%;transform:scaleX(0.9605);">Well heads</span>
<svg style="left:742.8px;top:344px;width:18px;height:18px" viewBox="-9 -9 18 18"><g fill="#0b4596"><circle cx="0" cy="0" r="4.7"/><path d="M-1.5 -4 L-1.1 -7.05 L1.1 -7.05 L1.5 -4 Z" transform="rotate(0)"/><path d="M-1.5 -4 L-1.1 -7.05 L1.1 -7.05 L1.5 -4 Z" transform="rotate(45)"/><path d="M-1.5 -4 L-1.1 -7.05 L1.1 -7.05 L1.5 -4 Z" transform="rotate(90)"/><path d="M-1.5 -4 L-1.1 -7.05 L1.1 -7.05 L1.5 -4 Z" transform="rotate(135)"/><path d="M-1.5 -4 L-1.1 -7.05 L1.1 -7.05 L1.5 -4 Z" transform="rotate(180)"/><path d="M-1.5 -4 L-1.1 -7.05 L1.1 -7.05 L1.5 -4 Z" transform="rotate(225)"/><path d="M-1.5 -4 L-1.1 -7.05 L1.1 -7.05 L1.5 -4 Z" transform="rotate(270)"/><path d="M-1.5 -4 L-1.1 -7.05 L1.1 -7.05 L1.5 -4 Z" transform="rotate(315)"/></g><circle cx="0" cy="0" r="1.95" fill="#f0f0f0"/></svg>
<div style="left:196px;top:369px;width:566px;height:23px;background:#fff;border:1px solid #adadad;border-radius:3px;"></div>
<span id="t20" class="t g" style="top:373px;line-height:16px;left:199.3px;transform-origin:0 50%;transform:scaleX(0.9748);">Filter</span>
<div style="left:196px;top:392px;width:566px;height:363px;background:#fff;border:1px solid #adadad;"></div>
<div style="left:197px;top:393px;width:551px;height:19px;background:linear-gradient(#fff,#f5f5f5 50%,#ebebeb);border-bottom:1px solid #c6c6c6;"></div>
<div style="left:300px;top:393px;width:1px;height:18px;background:#c9c9c9;"></div>
<div style="left:400px;top:393px;width:1px;height:18px;background:#c9c9c9;"></div>
<div style="left:500px;top:393px;width:1px;height:18px;background:#c9c9c9;"></div>
<div style="left:600px;top:393px;width:1px;height:18px;background:#c9c9c9;"></div>
<div style="left:704px;top:393px;width:1px;height:18px;background:#c9c9c9;"></div>
<span id="t21" class="t b" style="top:395px;line-height:16px;left:250.5px;transform-origin:50% 50%;transform:translateX(-50%) scaleX(1.0117);">UWI</span>
<span id="t22" class="t b" style="top:395px;line-height:16px;left:350.5px;transform-origin:50% 50%;transform:translateX(-50%) scaleX(0.9943);">Name</span>
<span id="t23" class="t b" style="top:395px;line-height:16px;left:450.5px;transform-origin:50% 50%;transform:translateX(-50%) scaleX(1.0327);">X (feet)</span>
<span id="t24" class="t b" style="top:395px;line-height:16px;left:551px;transform-origin:50% 50%;transform:translateX(-50%) scaleX(1.0259);">Y (feet)</span>
<span id="t25" class="t b" style="top:395px;line-height:16px;left:604.8px;transform-origin:0 50%;transform:scaleX(1.0017);">Total depth (feet)</span>
<div class="clip" style="left:705px;top:393px;width:42.6px;height:18px;">
<span id="t26" class="t b" style="top:2px;line-height:16px;left:-7.2px;transform-origin:0 50%;transform:scaleX(0.9614);">Kelley bu</span>
</div>
<div style="left:197px;top:412px;width:4px;height:329px;background:#ececec;border-right:1px solid #c4c4c4;"></div>
<div style="left:201px;top:412px;width:547px;height:29px;background:#0078d7;"></div>
<div style="left:201px;top:412px;width:99px;height:29px;background:#1a84dc;"></div>
<div style="left:197px;top:441px;width:551px;height:1px;background:#d4d4d4;"></div>
<div style="left:197px;top:471px;width:551px;height:1px;background:#d4d4d4;"></div>
<div style="left:197px;top:501px;width:551px;height:1px;background:#d4d4d4;"></div>
<div style="left:197px;top:531px;width:551px;height:1px;background:#d4d4d4;"></div>
<div style="left:197px;top:561px;width:551px;height:1px;background:#d4d4d4;"></div>
<div style="left:197px;top:591px;width:551px;height:1px;background:#d4d4d4;"></div>
<div style="left:197px;top:621px;width:551px;height:1px;background:#d4d4d4;"></div>
<div style="left:197px;top:651px;width:551px;height:1px;background:#d4d4d4;"></div>
<div style="left:197px;top:681px;width:551px;height:1px;background:#d4d4d4;"></div>
<div style="left:197px;top:711px;width:551px;height:1px;background:#d4d4d4;"></div>
<div style="left:197px;top:741px;width:551px;height:1px;background:#d4d4d4;"></div>
<div style="left:300px;top:412px;width:1px;height:329px;background:#d4d4d4;"></div>
<div style="left:400px;top:412px;width:1px;height:329px;background:#d4d4d4;"></div>
<div style="left:500px;top:412px;width:1px;height:329px;background:#d4d4d4;"></div>
<div style="left:600px;top:412px;width:1px;height:329px;background:#d4d4d4;"></div>
<div style="left:704px;top:412px;width:1px;height:329px;background:#d4d4d4;"></div>
<span id="t27" class="t w" style="top:419px;line-height:16px;left:204.3px;font-size:12.5px;transform-origin:0 50%;transform:scaleX(0.8631);">49025065260000</span>
<span id="t28" class="t w" style="top:419px;line-height:16px;left:304.3px;font-size:12.5px;transform-origin:0 50%;transform:scaleX(0.9273);">1-Tp-33</span>
<span id="t29" class="t w" style="top:419px;line-height:16px;left:404.3px;font-size:12.5px;transform-origin:0 50%;transform:scaleX(0.8630);">2616035.104976</span>
<span id="t30" class="t w" style="top:419px;line-height:16px;left:504.3px;font-size:12.5px;transform-origin:0 50%;transform:scaleX(0.8630);">3162829.724397</span>
<span id="t31" class="t w" style="top:419px;line-height:16px;left:604.3px;font-size:12.5px;transform-origin:0 50%;transform:scaleX(0.8630);">18205.380577</span>
<div class="clip" style="left:705px;top:416px;width:42.6px;height:20px;">
<span id="t32" class="t w" style="top:3px;line-height:16px;left:3.8px;font-size:12.5px;transform-origin:0 50%;transform:scaleX(0.8631);">16929.1</span>
</div>
<span id="t33" class="t " style="top:449px;line-height:16px;left:204.3px;font-size:12.5px;transform-origin:0 50%;transform:scaleX(0.8631);">49025065280000</span>
<span id="t34" class="t " style="top:449px;line-height:16px;left:304.3px;font-size:12.5px;transform-origin:0 50%;transform:scaleX(0.9059);">85-S-34</span>
<span id="t35" class="t " style="top:449px;line-height:16px;left:404.3px;font-size:12.5px;transform-origin:0 50%;transform:scaleX(0.8630);">2636331.364819</span>
<span id="t36" class="t " style="top:449px;line-height:16px;left:504.3px;font-size:12.5px;transform-origin:0 50%;transform:scaleX(0.8630);">3161452.427809</span>
<span id="t37" class="t " style="top:449px;line-height:16px;left:604.3px;font-size:12.5px;transform-origin:0 50%;transform:scaleX(0.8630);">2529.527559</span>
<div class="clip" style="left:705px;top:446px;width:42.6px;height:20px;">
<span id="t38" class="t " style="top:3px;line-height:16px;left:3.8px;font-size:12.5px;transform-origin:0 50%;transform:scaleX(0.8631);">16653.5</span>
</div>
<span id="t39" class="t " style="top:479px;line-height:16px;left:204.3px;font-size:12.5px;transform-origin:0 50%;transform:scaleX(0.8631);">49025065290000</span>
<span id="t40" class="t " style="top:479px;line-height:16px;left:304.3px;font-size:12.5px;transform-origin:0 50%;transform:scaleX(0.9059);">86-S-34</span>
<span id="t41" class="t " style="top:479px;line-height:16px;left:404.3px;font-size:12.5px;transform-origin:0 50%;transform:scaleX(0.8630);">2636390.091853</span>
<span id="t42" class="t " style="top:479px;line-height:16px;left:504.3px;font-size:12.5px;transform-origin:0 50%;transform:scaleX(0.8630);">3159262.139095</span>
<span id="t43" class="t " style="top:479px;line-height:16px;left:604.3px;font-size:12.5px;transform-origin:0 50%;transform:scaleX(0.8741);">2660.761155</span>
<div class="clip" style="left:705px;top:476px;width:42.6px;height:20px;">
<span id="t44" class="t " style="top:3px;line-height:16px;left:3.8px;font-size:12.5px;transform-origin:0 50%;transform:scaleX(0.8631);">16729.0</span>
</div>
<span id="t45" class="t " style="top:509px;line-height:16px;left:204.3px;font-size:12.5px;transform-origin:0 50%;transform:scaleX(0.8631);">49025065300000</span>
<span id="t46" class="t " style="top:509px;line-height:16px;left:304.3px;font-size:12.5px;transform-origin:0 50%;transform:scaleX(0.9059);">75-S-34</span>
<span id="t47" class="t " style="top:509px;line-height:16px;left:404.3px;font-size:12.5px;transform-origin:0 50%;transform:scaleX(0.8630);">2634253.280829</span>
<span id="t48" class="t " style="top:509px;line-height:16px;left:504.3px;font-size:12.5px;transform-origin:0 50%;transform:scaleX(0.8630);">3161512.467179</span>
<span id="t49" class="t " style="top:509px;line-height:16px;left:604.3px;font-size:12.5px;transform-origin:0 50%;transform:scaleX(0.8630);">2496.719160</span>
<div class="clip" style="left:705px;top:506px;width:42.6px;height:20px;">
<span id="t50" class="t " style="top:3px;line-height:16px;left:3.8px;font-size:12.5px;transform-origin:0 50%;transform:scaleX(0.8631);">16692.9</span>
</div>
<span id="t51" class="t " style="top:539px;line-height:16px;left:204.3px;font-size:12.5px;transform-origin:0 50%;transform:scaleX(0.8631);">49025065370000</span>
<span id="t52" class="t " style="top:539px;line-height:16px;left:304.3px;font-size:12.5px;transform-origin:0 50%;transform:scaleX(0.9059);">25-S-35</span>
<span id="t53" class="t " style="top:539px;line-height:16px;left:404.3px;font-size:12.5px;transform-origin:0 50%;transform:scaleX(0.8630);">2640210.957995</span>
<span id="t54" class="t " style="top:539px;line-height:16px;left:504.3px;font-size:12.5px;transform-origin:0 50%;transform:scaleX(0.8717);">3162114.173216</span>
<span id="t55" class="t " style="top:539px;line-height:16px;left:604.3px;font-size:12.5px;transform-origin:0 50%;transform:scaleX(0.8630);">3005.249344</span>
<div class="clip" style="left:705px;top:536px;width:42.6px;height:20px;">
<span id="t56" class="t " style="top:3px;line-height:16px;left:3.8px;font-size:12.5px;transform-origin:0 50%;transform:scaleX(0.8631);">16738.8</span>
</div>
<span id="t57" class="t " style="top:569px;line-height:16px;left:204.3px;font-size:12.5px;transform-origin:0 50%;transform:scaleX(0.8631);">49025065390000</span>
<span id="t58" class="t " style="top:569px;line-height:16px;left:304.3px;font-size:12.5px;transform-origin:0 50%;transform:scaleX(0.9059);">74-S-34</span>
<span id="t59" class="t " style="top:569px;line-height:16px;left:404.3px;font-size:12.5px;transform-origin:0 50%;transform:scaleX(0.8630);">2634241.797890</span>
<span id="t60" class="t " style="top:569px;line-height:16px;left:504.3px;font-size:12.5px;transform-origin:0 50%;transform:scaleX(0.8630);">3163635.170591</span>
<span id="t61" class="t " style="top:569px;line-height:16px;left:604.3px;font-size:12.5px;transform-origin:0 50%;transform:scaleX(0.8630);">2263.779528</span>
<div class="clip" style="left:705px;top:566px;width:42.6px;height:20px;">
<span id="t62" class="t " style="top:3px;line-height:16px;left:3.8px;font-size:12.5px;transform-origin:0 50%;transform:scaleX(0.8631);">16564.9</span>
</div>
<span id="t63" class="t " style="top:599px;line-height:16px;left:204.3px;font-size:12.5px;transform-origin:0 50%;transform:scaleX(0.8631);">49025065400000</span>
<span id="t64" class="t " style="top:599px;line-height:16px;left:304.3px;font-size:12.5px;transform-origin:0 50%;transform:scaleX(0.9059);">84-S-34</span>
<span id="t65" class="t " style="top:599px;line-height:16px;left:404.3px;font-size:12.5px;transform-origin:0 50%;transform:scaleX(0.8630);">2636098.425186</span>
<span id="t66" class="t " style="top:599px;line-height:16px;left:504.3px;font-size:12.5px;transform-origin:0 50%;transform:scaleX(0.8630);">3163855.643032</span>
<span id="t67" class="t " style="top:599px;line-height:16px;left:604.3px;font-size:12.5px;transform-origin:0 50%;transform:scaleX(0.8630);">2526.246719</span>
<div class="clip" style="left:705px;top:596px;width:42.6px;height:20px;">
<span id="t68" class="t " style="top:3px;line-height:16px;left:3.8px;font-size:12.5px;transform-origin:0 50%;transform:scaleX(0.8631);">16689.6</span>
</div>
<span id="t69" class="t " style="top:629px;line-height:16px;left:204.3px;font-size:12.5px;transform-origin:0 50%;transform:scaleX(0.8631);">49025065450000</span>
<span id="t70" class="t " style="top:629px;line-height:16px;left:304.3px;font-size:12.5px;transform-origin:0 50%;transform:scaleX(0.9059);">15-S-35</span>
<span id="t71" class="t " style="top:629px;line-height:16px;left:404.3px;font-size:12.5px;transform-origin:0 50%;transform:scaleX(0.8630);">2638513.779517</span>
<span id="t72" class="t " style="top:629px;line-height:16px;left:504.3px;font-size:12.5px;transform-origin:0 50%;transform:scaleX(0.8630);">3161421.259830</span>
<span id="t73" class="t " style="top:629px;line-height:16px;left:604.3px;font-size:12.5px;transform-origin:0 50%;transform:scaleX(0.8630);">2690.288714</span>
<div class="clip" style="left:705px;top:626px;width:42.6px;height:20px;">
<span id="t74" class="t " style="top:3px;line-height:16px;left:3.8px;font-size:12.5px;transform-origin:0 50%;transform:scaleX(0.8631);">16643.7</span>
</div>
<span id="t75" class="t " style="top:659px;line-height:16px;left:204.3px;font-size:12.5px;transform-origin:0 50%;transform:scaleX(0.8631);">49025065480000</span>
<span id="t76" class="t " style="top:659px;line-height:16px;left:304.3px;font-size:12.5px;transform-origin:0 50%;transform:scaleX(0.9059);">24-S-35</span>
<span id="t77" class="t " style="top:659px;line-height:16px;left:404.3px;font-size:12.5px;transform-origin:0 50%;transform:scaleX(0.8630);">2640328.083979</span>
<span id="t78" class="t " style="top:659px;line-height:16px;left:504.3px;font-size:12.5px;transform-origin:0 50%;transform:scaleX(0.8630);">3164797.244082</span>
<span id="t79" class="t " style="top:659px;line-height:16px;left:604.3px;font-size:12.5px;transform-origin:0 50%;transform:scaleX(0.8630);">2952.755906</span>
<div class="clip" style="left:705px;top:656px;width:42.6px;height:20px;">
<span id="t80" class="t " style="top:3px;line-height:16px;left:3.8px;font-size:12.5px;transform-origin:0 50%;transform:scaleX(0.8631);">16801.1</span>
</div>
<span id="t81" class="t " style="top:689px;line-height:16px;left:204.3px;font-size:12.5px;transform-origin:0 50%;transform:scaleX(0.8631);">49025065500000</span>
<span id="t82" class="t " style="top:689px;line-height:16px;left:304.3px;font-size:12.5px;transform-origin:0 50%;transform:scaleX(0.9059);">13-S-35</span>
<span id="t83" class="t " style="top:689px;line-height:16px;left:404.3px;font-size:12.5px;transform-origin:0 50%;transform:scaleX(0.8630);">2638464.895003</span>
<span id="t84" class="t " style="top:689px;line-height:16px;left:504.3px;font-size:12.5px;transform-origin:0 50%;transform:scaleX(0.8630);">3165960.629909</span>
<span id="t85" class="t " style="top:689px;line-height:16px;left:604.3px;font-size:12.5px;transform-origin:0 50%;transform:scaleX(0.8630);">2831.364829</span>
<div class="clip" style="left:705px;top:686px;width:42.6px;height:20px;">
<span id="t86" class="t " style="top:3px;line-height:16px;left:3.8px;font-size:12.5px;transform-origin:0 50%;transform:scaleX(0.8631);">16748.6</span>
</div>
<span id="t87" class="t " style="top:719px;line-height:16px;left:204.3px;font-size:12.5px;transform-origin:0 50%;transform:scaleX(0.8631);">49025065510000</span>
<span id="t88" class="t " style="top:719px;line-height:16px;left:304.3px;font-size:12.5px;transform-origin:0 50%;transform:scaleX(0.9059);">83-S-34</span>
<span id="t89" class="t " style="top:719px;line-height:16px;left:404.3px;font-size:12.5px;transform-origin:0 50%;transform:scaleX(0.8630);">2635883.530173</span>
<span id="t90" class="t " style="top:719px;line-height:16px;left:504.3px;font-size:12.5px;transform-origin:0 50%;transform:scaleX(0.8630);">3165583.333321</span>
<span id="t91" class="t " style="top:719px;line-height:16px;left:604.3px;font-size:12.5px;transform-origin:0 50%;transform:scaleX(0.8630);">2624.671916</span>
<div class="clip" style="left:705px;top:716px;width:42.6px;height:20px;">
<span id="t92" class="t " style="top:3px;line-height:16px;left:3.8px;font-size:12.5px;transform-origin:0 50%;transform:scaleX(0.8631);">16712.5</span>
</div>
<div style="left:748px;top:393px;width:13px;height:348px;background:#e4e4e4;"></div>
<div style="left:748px;top:393px;width:13px;height:14px;background:linear-gradient(90deg,#fff,#f4f4f4);border-bottom:1px solid #d2d2d2;"></div>
<div style="left:748px;top:407px;width:13px;height:18px;background:#dcdcdc;"></div>
<div style="left:748px;top:424px;width:13px;height:28px;background:linear-gradient(90deg,#fff,#f1f1f1);border-top:1px solid #cfcfcf;border-bottom:1px solid #cfcfcf;"></div>
<div style="left:748px;top:727px;width:13px;height:14px;background:linear-gradient(90deg,#fff,#f4f4f4);border-top:1px solid #d2d2d2;"></div>
<svg style="left:748px;top:393px;width:13px;height:348px" viewBox="0 0 13 348"><path d="M3.2 9 L9.8 9 L6.5 5.2 Z" fill="#5a5a5a"/><path d="M3.2 339 L9.8 339 L6.5 342.8 Z" fill="#5a5a5a"/></svg>
<div style="left:197px;top:740px;width:564px;height:14px;background:#e7e7e7;border-top:1px solid #d0d0d0;"></div>
<div style="left:197px;top:741px;width:14px;height:13px;background:linear-gradient(#fff,#f4f4f4);border-right:1px solid #d2d2d2;"></div>
<div style="left:734px;top:741px;width:14px;height:13px;background:linear-gradient(#fff,#f4f4f4);border-left:1px solid #d2d2d2;"></div>
<div style="left:211px;top:741px;width:436px;height:13px;background:linear-gradient(#fff,#f1f1f1);border-right:1px solid #cfcfcf;"></div>
<div style="left:748px;top:741px;width:13px;height:13px;background:#f0f0f0;"></div>
<svg style="left:197px;top:741px;width:551px;height:13px" viewBox="0 0 551 13"><path d="M9 2.8 L9 10.2 L5 6.5 Z" fill="#5a5a5a"/><path d="M541 2.8 L541 10.2 L545 6.5 Z" fill="#5a5a5a"/></svg>
<div style="left:194px;top:758px;width:570px;height:1px;background:#c6c6c6;"></div>
<div style="left:194px;top:758px;width:81px;height:25px;background:linear-gradient(#fff,#f9f9f9);border:1px solid #b9b9b9;border-top:none;border-radius:0 0 3px 3px;"></div>
<span id="t93" class="t " style="top:763px;line-height:16px;left:206.4px;transform-origin:0 50%;transform:scaleX(0.9517);">Well heads</span>
<svg style="left:765px;top:386px;width:4px;height:20px" viewBox="0 0 4 20"><rect x="1" y="1" width="1" height="1" fill="#a9a9a9"/><rect x="1" y="3" width="1" height="1" fill="#a9a9a9"/><rect x="1" y="5" width="1" height="1" fill="#a9a9a9"/><rect x="1" y="7" width="1" height="1" fill="#a9a9a9"/><rect x="1" y="9" width="1" height="1" fill="#a9a9a9"/><rect x="1" y="11" width="1" height="1" fill="#a9a9a9"/><rect x="1" y="13" width="1" height="1" fill="#a9a9a9"/><rect x="1" y="15" width="1" height="1" fill="#a9a9a9"/><rect x="1" y="17" width="1" height="1" fill="#a9a9a9"/></svg>
<svg style="left:1128px;top:386px;width:4px;height:20px" viewBox="0 0 4 20"><rect x="1" y="1" width="1" height="1" fill="#a9a9a9"/><rect x="1" y="3" width="1" height="1" fill="#a9a9a9"/><rect x="1" y="5" width="1" height="1" fill="#a9a9a9"/><rect x="1" y="7" width="1" height="1" fill="#a9a9a9"/><rect x="1" y="9" width="1" height="1" fill="#a9a9a9"/><rect x="1" y="11" width="1" height="1" fill="#a9a9a9"/><rect x="1" y="13" width="1" height="1" fill="#a9a9a9"/><rect x="1" y="15" width="1" height="1" fill="#a9a9a9"/><rect x="1" y="17" width="1" height="1" fill="#a9a9a9"/></svg>
<span id="t94" class="t b" style="top:10px;line-height:16px;left:769.6px;transform-origin:0 50%;transform:scaleX(0.9539);">Las files - 1-Tp-33</span>
<svg style="left:1106px;top:8.5px;width:18px;height:18px" viewBox="-9 -9 18 18"><g fill="#0b4596"><circle cx="0" cy="0" r="4.7"/><path d="M-1.5 -4 L-1.1 -7.05 L1.1 -7.05 L1.5 -4 Z" transform="rotate(0)"/><path d="M-1.5 -4 L-1.1 -7.05 L1.1 -7.05 L1.5 -4 Z" transform="rotate(45)"/><path d="M-1.5 -4 L-1.1 -7.05 L1.1 -7.05 L1.5 -4 Z" transform="rotate(90)"/><path d="M-1.5 -4 L-1.1 -7.05 L1.1 -7.05 L1.5 -4 Z" transform="rotate(135)"/><path d="M-1.5 -4 L-1.1 -7.05 L1.1 -7.05 L1.5 -4 Z" transform="rotate(180)"/><path d="M-1.5 -4 L-1.1 -7.05 L1.1 -7.05 L1.5 -4 Z" transform="rotate(225)"/><path d="M-1.5 -4 L-1.1 -7.05 L1.1 -7.05 L1.5 -4 Z" transform="rotate(270)"/><path d="M-1.5 -4 L-1.1 -7.05 L1.1 -7.05 L1.5 -4 Z" transform="rotate(315)"/></g><circle cx="0" cy="0" r="1.95" fill="#f0f0f0"/></svg>
<div style="left:770px;top:33px;width:355px;height:23px;background:#fff;border:1px solid #adadad;border-radius:3px;"></div>
<span id="t95" class="t g" style="top:37px;line-height:16px;left:773.3px;transform-origin:0 50%;transform:scaleX(0.9748);">Filter</span>
<div style="left:770px;top:56px;width:355px;height:699px;background:#fff;border:1px solid #adadad;"></div>
<div style="left:771px;top:57px;width:353px;height:19px;background:linear-gradient(#fff,#f5f5f5 50%,#ebebeb);border-bottom:1px solid #c6c6c6;"></div>
<div style="left:874px;top:57px;width:1px;height:18px;background:#c9c9c9;"></div>
<div style="left:874px;top:76px;width:1px;height:120px;background:#d4d4d4;"></div>
<div style="left:974px;top:57px;width:1px;height:18px;background:#c9c9c9;"></div>
<div style="left:974px;top:76px;width:1px;height:120px;background:#d4d4d4;"></div>
<span id="t96" class="t b" style="top:59px;line-height:16px;left:824.9px;transform-origin:50% 50%;transform:translateX(-50%) scaleX(0.8508);">Las</span>
<span id="t97" class="t b" style="top:59px;line-height:16px;left:924.5px;transform-origin:50% 50%;transform:translateX(-50%) scaleX(0.9701);">Curve</span>
<span id="t98" class="t b" style="top:59px;line-height:16px;left:1049.7px;transform-origin:50% 50%;transform:translateX(-50%) scaleX(0.9667);">Units</span>
<div style="left:771px;top:76px;width:4px;height:120px;background:#ececec;border-right:1px solid #c4c4c4;"></div>
<div style="left:775px;top:76px;width:349px;height:29px;background:#f0f0f0;"></div>
<div style="left:771px;top:105px;width:353px;height:1px;background:#d4d4d4;"></div>
<div style="left:771px;top:135px;width:353px;height:1px;background:#d4d4d4;"></div>
<div style="left:771px;top:165px;width:353px;height:1px;background:#d4d4d4;"></div>
<div style="left:771px;top:195px;width:353px;height:1px;background:#d4d4d4;"></div>
<span id="t99" class="t " style="top:83px;line-height:16px;left:777.6px;font-size:12.5px;transform-origin:0 50%;transform:scaleX(0.8631);">4902506526000...</span>
<span id="t100" class="t " style="top:83px;line-height:16px;left:878.3px;font-size:12.5px;transform-origin:0 50%;transform:scaleX(0.8170);">SPR</span>
<span id="t101" class="t " style="top:83px;line-height:16px;left:978.3px;font-size:12.5px;transform-origin:0 50%;transform:scaleX(0.9600);">MV</span>
<span id="t102" class="t " style="top:113px;line-height:16px;left:777.6px;font-size:12.5px;transform-origin:0 50%;transform:scaleX(0.8631);">4902506526000...</span>
<span id="t103" class="t " style="top:113px;line-height:16px;left:878.3px;font-size:12.5px;transform-origin:0 50%;transform:scaleX(0.8948);">ASN</span>
<span id="t104" class="t " style="top:113px;line-height:16px;left:978.3px;font-size:12.5px;transform-origin:0 50%;transform:scaleX(1.0107);">OHMM</span>
<span id="t105" class="t " style="top:143px;line-height:16px;left:777.6px;font-size:12.5px;transform-origin:0 50%;transform:scaleX(0.8631);">4902506526000...</span>
<span id="t106" class="t " style="top:143px;line-height:16px;left:878.3px;font-size:12.5px;transform-origin:0 50%;transform:scaleX(0.8864);">LAT</span>
<span id="t107" class="t " style="top:143px;line-height:16px;left:978.3px;font-size:12.5px;transform-origin:0 50%;transform:scaleX(1.0107);">OHMM</span>
<span id="t108" class="t " style="top:173px;line-height:16px;left:777.6px;font-size:12.5px;transform-origin:0 50%;transform:scaleX(0.8631);">4902506526000...</span>
<span id="t109" class="t " style="top:173px;line-height:16px;left:878.3px;font-size:12.5px;transform-origin:0 50%;transform:scaleX(0.8759);">LN</span>
<span id="t110" class="t " style="top:173px;line-height:16px;left:978.3px;font-size:12.5px;transform-origin:0 50%;transform:scaleX(1.0107);">OHMM</span>
<div style="left:768px;top:758px;width:360px;height:1px;background:#cdcdcd;"></div>
<div style="left:768px;top:758px;width:89px;height:23px;background:#e9e9e9;border:1px solid #c3c3c3;border-radius:0 0 3px 3px;"></div>
<span id="t111" class="t " style="top:762px;line-height:16px;left:781px;transform-origin:0 50%;transform:scaleX(0.9990);">Inclinome...</span>
<div style="left:856px;top:758px;width:61px;height:23px;background:#e9e9e9;border:1px solid #c3c3c3;border-radius:0 0 3px 3px;"></div>
<span id="t112" class="t " style="top:762px;line-height:16px;left:869.2px;transform-origin:0 50%;transform:scaleX(0.9599);">Mark...</span>
<div style="left:1054px;top:758px;width:74px;height:23px;background:#e9e9e9;border:1px solid #c3c3c3;border-radius:0 0 3px 3px;"></div>
<span id="t113" class="t " style="top:762px;line-height:16px;left:1065.7px;transform-origin:0 50%;transform:scaleX(0.9097);">Checks...</span>
<div style="left:916px;top:754px;width:139px;height:31px;background:#ed1c24;"></div>
<div style="left:921px;top:759px;width:55px;height:21px;background:#fff;"></div>
<div style="left:985px;top:759px;width:65px;height:21px;background:#e9e9e9;"></div>
<span id="t114" class="t " style="top:763px;line-height:16px;left:931.4px;transform-origin:0 50%;transform:scaleX(0.9047);">Las fi...</span>
<span id="t115" class="t " style="top:762px;line-height:16px;left:994.6px;transform-origin:0 50%;transform:scaleX(0.8929);">Las cu...</span>
<span id="t116" class="t b" style="top:10px;line-height:16px;left:1132px;transform-origin:0 50%;transform:scaleX(0.9981);">Well log view</span>
<div style="left:1140px;top:40px;width:362px;height:708px;background:#fafafa;border:1px solid #acacac;"></div>
<div style="left:1140px;top:739px;width:362px;height:9px;background:#b2b2b2;"></div>
<div style="left:1130px;top:758px;width:381px;height:1px;background:#c6c6c6;"></div>
<div style="left:1130px;top:758px;width:95px;height:25px;background:linear-gradient(#fff,#f9f9f9);border:1px solid #b9b9b9;border-top:none;border-radius:0 0 3px 3px;"></div>
<span id="t117" class="t " style="top:763px;line-height:16px;left:1143px;transform-origin:0 50%;transform:scaleX(1.0027);">Well log view</span>
<div style="left:1390px;top:41px;width:1px;height:698px;background:#a8a8a8;"></div>
<span id="t118" class="t dg" style="top:42px;line-height:16px;left:1265.3px;transform-origin:50% 50%;transform:translateX(-50%) scaleX(0.9517);">1-Tp-33</span>
<div style="left:1190px;top:59px;width:150px;height:1px;background:#8a8a8a;"></div>
<span id="t119" class="t dg" style="top:63px;line-height:16px;left:1200.2px;transform-origin:0 50%;transform:scaleX(0.8843);">Scale:</span>
<span id="t120" class="t dg" style="top:63px;line-height:16px;left:1248.5px;transform-origin:0 50%;transform:scaleX(0.9046);">0.0903</span>
<span id="t121" class="t dg" style="top:63px;line-height:16px;left:1300.1px;transform-origin:0 50%;transform:scaleX(1.1314);">[px/ft]</span>
<div style="left:1141px;top:79px;width:249px;height:1px;background:#a8a8a8;"></div>
<div style="left:1141px;top:80px;width:48px;height:123px;background:#e4e4e4;"></div>
<div style="left:1189px;top:80px;width:1px;height:659px;background:#a4a4a4;"></div>
<span id="t122" class="t dg" style="top:130px;line-height:14px;left:1164.6px;font-size:11px;transform-origin:50% 50%;transform:translateX(-50%) scaleX(0.9059);">MD</span>
<span id="t123" class="t dg" style="top:142px;line-height:14px;left:1164.6px;font-size:11px;transform-origin:50% 50%;transform:translateX(-50%) scaleX(1.0217);">[ft]</span>
<div style="left:1193px;top:83px;width:188px;height:38px;background:#fafafa;border:1px solid #a6a6a6;"></div>
<span id="t124" class="t dg" style="top:85px;line-height:12px;left:1286.8px;font-size:10.5px;transform-origin:50% 50%;transform:translateX(-50%) scaleX(0.9389);">LAT (OHMM)</span>
<span id="t125" class="t dg" style="top:95px;line-height:12px;left:1196px;font-size:10.5px;transform-origin:0 50%;transform:scaleX(0.8214);">0.2</span>
<span id="t126" class="t dg" style="top:95px;line-height:12px;left:1286.8px;font-size:10.5px;transform-origin:50% 50%;transform:translateX(-50%) scaleX(0.8470);">NONE</span>
<span id="t127" class="t dg" style="top:95px;line-height:12px;left:1378px;font-size:10.5px;transform-origin:100% 50%;transform:translateX(-100%) scaleX(0.8433);">2000</span>
<div style="left:1196px;top:107px;width:34px;height:1px;background:#8a8a8a;"></div>
<div style="left:1344px;top:107px;width:34px;height:1px;background:#8a8a8a;"></div>
<div style="left:1197px;top:113px;width:181px;height:1px;background:#0000ff;"></div>
<div style="left:1193px;top:123px;width:188px;height:38px;background:#fafafa;border:1px solid #a6a6a6;"></div>
<span id="t128" class="t dg" style="top:125px;line-height:12px;left:1286.8px;font-size:10.5px;transform-origin:50% 50%;transform:translateX(-50%) scaleX(0.9368);">LN (OHMM)</span>
<span id="t129" class="t dg" style="top:135px;line-height:12px;left:1196px;font-size:10.5px;transform-origin:0 50%;transform:scaleX(0.8214);">0.2</span>
<span id="t130" class="t dg" style="top:135px;line-height:12px;left:1286.8px;font-size:10.5px;transform-origin:50% 50%;transform:translateX(-50%) scaleX(0.8470);">NONE</span>
<span id="t131" class="t dg" style="top:135px;line-height:12px;left:1378px;font-size:10.5px;transform-origin:100% 50%;transform:translateX(-100%) scaleX(0.8433);">2000</span>
<div style="left:1196px;top:147px;width:34px;height:1px;background:#8a8a8a;"></div>
<div style="left:1344px;top:147px;width:34px;height:1px;background:#8a8a8a;"></div>
<div style="left:1197px;top:153px;width:181px;height:1px;background:#00008b;"></div>
<div style="left:1193px;top:163px;width:188px;height:38px;background:#fafafa;border:1px solid #a6a6a6;"></div>
<span id="t132" class="t dg" style="top:165px;line-height:12px;left:1286.8px;font-size:10.5px;transform-origin:50% 50%;transform:translateX(-50%) scaleX(0.9266);">ASN (OHMM)</span>
<span id="t133" class="t dg" style="top:175px;line-height:12px;left:1196px;font-size:10.5px;transform-origin:0 50%;transform:scaleX(0.8214);">0.2</span>
<span id="t134" class="t dg" style="top:175px;line-height:12px;left:1286.8px;font-size:10.5px;transform-origin:50% 50%;transform:translateX(-50%) scaleX(0.8470);">NONE</span>
<span id="t135" class="t dg" style="top:175px;line-height:12px;left:1378px;font-size:10.5px;transform-origin:100% 50%;transform:translateX(-100%) scaleX(0.8433);">2000</span>
<div style="left:1196px;top:187px;width:34px;height:1px;background:#8a8a8a;"></div>
<div style="left:1344px;top:187px;width:34px;height:1px;background:#8a8a8a;"></div>
<div style="left:1197px;top:193px;width:181px;height:1px;background:#4b0082;"></div>
<div style="left:1383px;top:83px;width:4px;height:119px;background:#a9a9a9;"></div>
<div style="left:1141px;top:202px;width:249px;height:1px;background:#c8c8c8;"></div>
<svg style="left:1141px;top:203px;width:249px;height:536px" viewBox="1141 203 249 536"><path d="M1141 208.5h6M1183 208.5h6" stroke="#9a9a9a" stroke-width="1"/><path d="M1141 217.5h4M1185 217.5h4" stroke="#9a9a9a" stroke-width="1"/><path d="M1141 226.5h4M1185 226.5h4" stroke="#9a9a9a" stroke-width="1"/><path d="M1141 235.5h4M1185 235.5h4" stroke="#9a9a9a" stroke-width="1"/><path d="M1141 244.5h4M1185 244.5h4" stroke="#9a9a9a" stroke-width="1"/><path d="M1141 253.5h6M1183 253.5h6" stroke="#9a9a9a" stroke-width="1"/><path d="M1141 262.5h4M1185 262.5h4" stroke="#9a9a9a" stroke-width="1"/><path d="M1141 271.5h4M1185 271.5h4" stroke="#9a9a9a" stroke-width="1"/><path d="M1141 280.5h4M1185 280.5h4" stroke="#9a9a9a" stroke-width="1"/><path d="M1141 289.5h4M1185 289.5h4" stroke="#9a9a9a" stroke-width="1"/><path d="M1141 298.5h6M1183 298.5h6" stroke="#9a9a9a" stroke-width="1"/><path d="M1141 307.5h4M1185 307.5h4" stroke="#9a9a9a" stroke-width="1"/><path d="M1141 316.5h4M1185 316.5h4" stroke="#9a9a9a" stroke-width="1"/><path d="M1141 325.5h4M1185 325.5h4" stroke="#9a9a9a" stroke-width="1"/><path d="M1141 334.5h4M1185 334.5h4" stroke="#9a9a9a" stroke-width="1"/><path d="M1141 343.5h6M1183 343.5h6" stroke="#9a9a9a" stroke-width="1"/><path d="M1141 352.5h4M1185 352.5h4" stroke="#9a9a9a" stroke-width="1"/><path d="M1141 362.5h4M1185 362.5h4" stroke="#9a9a9a" stroke-width="1"/><path d="M1141 371.5h4M1185 371.5h4" stroke="#9a9a9a" stroke-width="1"/><path d="M1141 380.5h4M1185 380.5h4" stroke="#9a9a9a" stroke-width="1"/><path d="M1141 389.5h6M1183 389.5h6" stroke="#9a9a9a" stroke-width="1"/><path d="M1141 398.5h4M1185 398.5h4" stroke="#9a9a9a" stroke-width="1"/><path d="M1141 407.5h4M1185 407.5h4" stroke="#9a9a9a" stroke-width="1"/><path d="M1141 416.5h4M1185 416.5h4" stroke="#9a9a9a" stroke-width="1"/><path d="M1141 425.5h4M1185 425.5h4" stroke="#9a9a9a" stroke-width="1"/><path d="M1141 434.5h6M1183 434.5h6" stroke="#9a9a9a" stroke-width="1"/><path d="M1141 443.5h4M1185 443.5h4" stroke="#9a9a9a" stroke-width="1"/><path d="M1141 452.5h4M1185 452.5h4" stroke="#9a9a9a" stroke-width="1"/><path d="M1141 461.5h4M1185 461.5h4" stroke="#9a9a9a" stroke-width="1"/><path d="M1141 470.5h4M1185 470.5h4" stroke="#9a9a9a" stroke-width="1"/><path d="M1141 479.5h6M1183 479.5h6" stroke="#9a9a9a" stroke-width="1"/><path d="M1141 488.5h4M1185 488.5h4" stroke="#9a9a9a" stroke-width="1"/><path d="M1141 497.5h4M1185 497.5h4" stroke="#9a9a9a" stroke-width="1"/><path d="M1141 506.5h4M1185 506.5h4" stroke="#9a9a9a" stroke-width="1"/><path d="M1141 515.5h4M1185 515.5h4" stroke="#9a9a9a" stroke-width="1"/><path d="M1141 524.5h6M1183 524.5h6" stroke="#9a9a9a" stroke-width="1"/><path d="M1141 533.5h4M1185 533.5h4" stroke="#9a9a9a" stroke-width="1"/><path d="M1141 542.5h4M1185 542.5h4" stroke="#9a9a9a" stroke-width="1"/><path d="M1141 551.5h4M1185 551.5h4" stroke="#9a9a9a" stroke-width="1"/><path d="M1141 560.5h4M1185 560.5h4" stroke="#9a9a9a" stroke-width="1"/><path d="M1141 569.5h6M1183 569.5h6" stroke="#9a9a9a" stroke-width="1"/><path d="M1141 578.5h4M1185 578.5h4" stroke="#9a9a9a" stroke-width="1"/><path d="M1141 587.5h4M1185 587.5h4" stroke="#9a9a9a" stroke-width="1"/><path d="M1141 596.5h4M1185 596.5h4" stroke="#9a9a9a" stroke-width="1"/><path d="M1141 605.5h4M1185 605.5h4" stroke="#9a9a9a" stroke-width="1"/><path d="M1141 614.5h6M1183 614.5h6" stroke="#9a9a9a" stroke-width="1"/><path d="M1141 623.5h4M1185 623.5h4" stroke="#9a9a9a" stroke-width="1"/><path d="M1141 632.5h4M1185 632.5h4" stroke="#9a9a9a" stroke-width="1"/><path d="M1141 641.5h4M1185 641.5h4" stroke="#9a9a9a" stroke-width="1"/><path d="M1141 650.5h4M1185 650.5h4" stroke="#9a9a9a" stroke-width="1"/><path d="M1141 660.5h6M1183 660.5h6" stroke="#9a9a9a" stroke-width="1"/><path d="M1141 669.5h4M1185 669.5h4" stroke="#9a9a9a" stroke-width="1"/><path d="M1141 678.5h4M1185 678.5h4" stroke="#9a9a9a" stroke-width="1"/><path d="M1141 687.5h4M1185 687.5h4" stroke="#9a9a9a" stroke-width="1"/><path d="M1141 696.5h4M1185 696.5h4" stroke="#9a9a9a" stroke-width="1"/><path d="M1141 705.5h6M1183 705.5h6" stroke="#9a9a9a" stroke-width="1"/><path d="M1141 714.5h4M1185 714.5h4" stroke="#9a9a9a" stroke-width="1"/><path d="M1141 723.5h4M1185 723.5h4" stroke="#9a9a9a" stroke-width="1"/><path d="M1141 732.5h4M1185 732.5h4" stroke="#9a9a9a" stroke-width="1"/><path d="M1141 210.5h8M1181 210.5h8" stroke="#444" stroke-width="1"/><path d="M1190 210.5H1390" stroke="#4d4d4d" stroke-width="1"/><path d="M1141 223.5h8M1181 223.5h8" stroke="#444" stroke-width="1"/><path d="M1190 223.5H1390" stroke="#4d4d4d" stroke-width="1"/><path d="M1141 335.5h8M1181 335.5h8" stroke="#444" stroke-width="1"/><path d="M1190 335.5H1390" stroke="#4d4d4d" stroke-width="1"/><path d="M1141 362.5h8M1181 362.5h8" stroke="#444" stroke-width="1"/><path d="M1190 362.5H1390" stroke="#4d4d4d" stroke-width="1"/><path d="M1141 386.5h8M1181 386.5h8" stroke="#444" stroke-width="1"/><path d="M1190 386.5H1390" stroke="#4d4d4d" stroke-width="1"/><path d="M1141 721.5h8M1181 721.5h8" stroke="#444" stroke-width="1"/><path d="M1190 721.5H1390" stroke="#4d4d4d" stroke-width="1"/><path d="M1190 249.5H1390" stroke="#b4b4b4" stroke-width="1"/></svg>
<span id="t136" class="t dg" style="top:202px;line-height:12px;left:1164.8px;font-size:10.5px;transform-origin:50% 50%;transform:translateX(-50%) scaleX(0.8898);">0</span>
<span id="t137" class="t dg" style="top:293px;line-height:12px;left:1164.8px;font-size:10.5px;transform-origin:50% 50%;transform:translateX(-50%) scaleX(0.8904);">1000</span>
<span id="t138" class="t dg" style="top:338px;line-height:12px;left:1164.8px;font-size:10.5px;transform-origin:50% 50%;transform:translateX(-50%) scaleX(0.8904);">1500</span>
<span id="t139" class="t dg" style="top:383px;line-height:12px;left:1164.8px;font-size:10.5px;transform-origin:50% 50%;transform:translateX(-50%) scaleX(0.8904);">2000</span>
<span id="t140" class="t dg" style="top:428px;line-height:12px;left:1164.8px;font-size:10.5px;transform-origin:50% 50%;transform:translateX(-50%) scaleX(0.8904);">2500</span>
<span id="t141" class="t dg" style="top:473px;line-height:12px;left:1164.8px;font-size:10.5px;transform-origin:50% 50%;transform:translateX(-50%) scaleX(0.8904);">3000</span>
<span id="t142" class="t dg" style="top:519px;line-height:12px;left:1164.8px;font-size:10.5px;transform-origin:50% 50%;transform:translateX(-50%) scaleX(0.8904);">3500</span>
<span id="t143" class="t dg" style="top:564px;line-height:12px;left:1164.8px;font-size:10.5px;transform-origin:50% 50%;transform:translateX(-50%) scaleX(0.8904);">4000</span>
<span id="t144" class="t dg" style="top:609px;line-height:12px;left:1164.8px;font-size:10.5px;transform-origin:50% 50%;transform:translateX(-50%) scaleX(0.8904);">4500</span>
<span id="t145" class="t dg" style="top:654px;line-height:12px;left:1164.8px;font-size:10.5px;transform-origin:50% 50%;transform:translateX(-50%) scaleX(0.8904);">5000</span>
<span id="t146" class="t dg" style="top:699px;line-height:12px;left:1164.8px;font-size:10.5px;transform-origin:50% 50%;transform:translateX(-50%) scaleX(0.8904);">5500</span>
<span id="t147" class="t dg" style="top:244px;line-height:12px;left:1164.8px;font-size:10.5px;transform-origin:50% 50%;transform:translateX(-50%) scaleX(0.8716);">453.17</span>
<span id="t148" class="t dg" style="top:248px;line-height:12px;left:1164.8px;font-size:10.5px;transform-origin:50% 50%;transform:translateX(-50%) scaleX(0.8898);">500</span>
<div class="clip" style="left:1190px;top:203px;width:200px;height:8px">
<span id="t149" class="t g" style="top:-10.5px;line-height:14px;left:99.5px;transform-origin:50% 50%;transform:translateX(-50%);">SSXs</span>
</div>
<span id="t150" class="t g" style="top:208px;line-height:14px;left:1289.5px;transform-origin:50% 50%;transform:translateX(-50%) scaleX(0.8692);">SSXbase</span>
<span id="t151" class="t g" style="top:319px;line-height:14px;left:1289.5px;transform-origin:50% 50%;transform:translateX(-50%) scaleX(0.9831);">SHNNu</span>
<span id="t152" class="t g" style="top:346px;line-height:14px;left:1289.5px;transform-origin:50% 50%;transform:translateX(-50%) scaleX(0.9817);">SHNNl</span>
<span id="t153" class="t g" style="top:370px;line-height:14px;left:1289.5px;transform-origin:50% 50%;transform:translateX(-50%) scaleX(0.9639);">SHNNbs</span>
<span id="t154" class="t g" style="top:705px;line-height:14px;left:1289.5px;transform-origin:50% 50%;transform:translateX(-50%) scaleX(0.9040);">NBRRws</span>
<svg style="left:1190px;top:203px;width:200px;height:536px" viewBox="1190 203 200 536" fill="none" stroke-linejoin="round"><path d="M1191.0 262.2 L1250.8 262.2 L1256.0 262.9 L1253.6 263.6 L1257.8 263.8 L1246.8 264.2 L1246.6 265.9 L1240.8 265.8 L1255.8 266.2 L1246.1 268.2 L1252.8 268.9 L1223.8 269.4 L1243.8 270.6 L1240.8 270.8 L1254.8 271.2 L1251.3 272.9 L1256.8 273.8 L1243.8 274.2 L1249.2 275.2 L1246.8 276.4 L1258.8 276.9 L1254.3 277.6 L1246.8 279.8 L1241.8 279.8 L1253.8 280.2 L1247.9 282.1 L1250.8 283.8 L1238.8 284.2 L1240.7 286.8 L1237.3 286.8 L1248.8 287.2 L1247.6 289.0 L1245.2 291.2 L1240.8 291.2 L1254.3 291.8 L1250.1 293.4 L1248.2 295.8 L1243.8 295.8 L1254.8 296.2 L1249.9 298.1 L1252.8 299.8 L1241.8 300.2 L1246.0 302.7 L1243.8 304.8 L1254.8 305.2 L1251.3 307.5 L1247.8 309.9 L1243.8 311.4 L1255.8 311.9 L1249.5 314.2 L1251.8 315.8 L1240.8 316.2 L1244.0 316.5 L1246.8 318.7 L1250.8 319.8 L1238.8 320.2 L1245.1 320.9 L1240.8 322.6 L1257.0 323.1 L1236.4 324.1 L1250.8 324.6 L1246.2 325.3 L1242.5 327.6 L1239.8 327.8 L1249.8 328.2 L1245.6 329.9 L1247.8 331.8 L1240.8 332.2 L1244.1 334.6 L1241.8 335.8 L1247.8 336.2 L1245.8 336.9 L1244.7 339.2 L1242.8 339.8 L1248.8 340.2 L1247.3 341.6 L1245.5 343.8 L1243.8 345.1 L1251.3 345.6 L1248.0 346.1 L1245.1 348.5 L1241.8 349.8 L1247.8 350.2 L1245.7 351.0 L1242.7 353.4 L1240.8 353.8 L1246.8 354.2 L1243.0 355.7 L1246.8 356.8 L1230.0 357.2 L1236.2 358.0 L1237.8 359.8 L1246.8 360.2 L1244.3 362.4 L1247.8 362.8 L1236.8 363.2 L1242.3 364.6 L1236.4 364.9 L1255.8 365.4 L1248.9 367.0 L1252.8 367.8 L1244.8 368.2 L1248.8 369.2 L1246.8 370.8 L1252.8 371.2 L1250.7 371.7 L1249.3 373.9 L1247.8 374.2 L1252.8 374.8 L1252.2 376.4 L1251.0 378.8 L1245.4 379.4 L1259.5 379.9 L1254.9 380.9 L1255.8 382.8 L1249.8 383.2 L1251.5 385.6 L1249.8 386.2 L1254.8 386.8 L1251.0 387.8 L1249.8 389.1 L1243.8 389.6 L1244.6 390.3 L1246.7 391.7 L1242.4 393.0 L1238.8 393.6 L1248.4 394.1 L1244.3 394.5 L1241.1 396.1 L1236.8 396.2 L1246.8 396.8 L1241.8 397.4 L1232.5 398.8 L1225.3 399.2 L1244.8 399.8 L1238.8 400.1 L1242.7 401.7 L1236.8 401.8 L1254.3 402.2 L1247.2 403.3 L1252.8 404.2 L1240.8 404.8 L1243.3 406.0 L1238.8 406.2 L1255.5 406.8 L1240.1 407.3 L1245.8 407.2 L1228.3 407.8 L1233.7 408.6 L1224.8 409.8 L1240.8 410.2 L1237.5 411.5 L1244.8 411.8 L1230.8 412.2 L1236.7 413.0 L1232.0 413.8 L1246.1 414.2 L1243.0 415.8 L1247.8 416.2 L1233.8 416.8 L1240.1 417.3 L1233.5 418.1 L1250.6 418.6 L1244.7 420.1 L1250.8 420.8 L1238.8 421.2 L1244.1 422.9 L1240.8 423.4 L1250.8 423.9 L1248.2 424.3 L1244.0 425.6 L1241.8 425.8 L1250.8 426.2 L1248.0 427.2 L1244.9 428.8 L1240.8 428.6 L1252.8 429.1 L1256.6 430.2 L1263.3 430.1 L1248.8 430.6 L1256.5 431.7 L1254.8 431.8 L1264.8 432.2 L1265.6 433.1 L1272.6 433.4 L1253.8 433.9 L1259.2 434.5 L1255.8 435.2 L1264.8 435.8 L1261.7 436.1 L1266.8 436.8 L1256.8 437.2 L1261.0 437.6 L1252.8 437.9 L1271.0 438.4 L1258.6 438.9 L1256.8 439.8 L1243.8 440.2 L1252.8 441.2 L1241.8 441.8 L1254.3 442.8 L1243.1 443.2 L1249.1 444.8 L1244.8 444.8 L1255.8 445.2 L1251.9 446.2 L1260.3 446.1 L1240.8 446.6 L1250.8 447.1 L1218.6 447.6 L1256.8 448.4 L1230.8 448.9 L1263.5 449.4 L1235.8 449.9 L1244.8 451.4 L1230.8 451.9 L1235.8 453.0 L1232.8 453.2 L1243.8 453.8 L1238.7 454.5 L1240.8 455.4 L1225.3 455.9 L1244.6 456.9 L1230.8 457.4 L1228.4 459.0 L1223.0 458.8 L1240.8 459.2 L1236.6 460.4 L1241.8 460.6 L1230.8 461.1 L1235.2 461.9 L1232.0 462.2 L1240.8 462.8 L1254.6 463.4 L1254.1 464.8 L1238.8 465.1 L1312.4 465.6 L1272.1 466.1 L1243.4 467.7 L1235.0 468.1 L1240.8 468.6 L1237.8 469.2 L1240.8 469.8 L1230.8 470.2 L1233.0 470.6 L1235.8 472.0 L1238.8 471.8 L1228.8 472.2 L1228.0 473.5 L1217.1 474.8 L1236.8 475.2 L1225.8 475.8 L1245.4 476.2 L1232.8 477.8 L1243.8 478.2 L1232.8 479.2 L1246.8 479.8 L1244.6 481.1 L1248.8 481.2 L1234.8 481.8 L1244.8 482.5 L1236.8 482.9 L1273.7 483.4 L1258.4 483.8 L1261.8 484.4 L1230.8 484.9 L1240.8 485.9 L1212.6 486.4 L1226.0 486.7 L1225.8 487.2 L1248.8 487.8 L1242.7 488.1 L1251.3 488.9 L1230.5 489.4 L1235.1 491.0 L1227.5 491.4 L1255.8 491.9 L1244.1 492.6 L1246.8 493.8 L1232.8 494.2 L1237.3 495.4 L1233.5 495.9 L1242.4 496.4 L1239.0 496.8 L1231.9 498.3 L1225.8 498.2 L1238.8 498.8 L1232.5 499.6 L1236.4 500.4 L1221.5 500.9 L1228.7 502.4 L1224.5 503.4 L1236.4 503.9 L1232.2 505.5 L1238.8 505.8 L1222.8 506.2 L1228.9 506.9 L1235.7 508.4 L1246.1 508.6 L1217.8 509.1 L1230.1 509.8 L1225.8 510.2 L1243.8 510.8 L1239.8 511.1 L1235.4 512.5 L1230.5 512.4 L1245.4 512.9 L1241.2 513.9 L1250.8 514.2 L1228.8 514.8 L1232.6 515.2 L1214.8 515.8 L1262.5 516.2 L1244.7 516.6 L1258.8 517.8 L1230.8 518.2 L1258.8 517.8 L1230.8 518.2 L1245.2 519.5 L1234.8 519.8 L1261.8 520.2 L1251.3 520.8 L1252.8 521.8 L1232.8 522.2 L1238.4 523.8 L1232.0 524.2 L1248.3 524.8 L1240.2 525.4 L1229.3 526.9 L1222.8 526.8 L1245.8 527.2 L1236.3 528.4 L1253.6 529.5 L1198.9 530.0 L1228.9 531.2 L1215.8 531.2 L1248.8 531.8 L1237.9 532.5 L1246.8 533.2 L1216.8 533.8 L1224.0 535.4 L1215.6 535.4 L1244.6 535.9 L1230.5 536.9 L1238.8 536.8 L1217.8 537.2 L1220.7 538.5 L1216.3 538.4 L1230.5 538.9 L1235.6 539.8 L1245.8 539.8 L1220.8 540.2 L1235.2 541.3 L1223.0 541.0 L1253.6 541.5 L1242.8 542.7 L1252.8 542.8 L1222.8 543.2 L1236.5 544.2 L1216.3 544.4 L1264.8 544.9 L1247.7 545.6 L1262.8 545.8 L1222.8 546.2 L1241.4 547.2 L1226.0 547.4 L1264.0 547.9 L1251.5 548.6 L1268.8 548.8 L1222.8 549.2 L1276.7 549.8 L1220.8 550.2 L1274.8 551.2 L1222.8 551.8 L1283.4 552.8 L1214.8 553.2 L1233.3 554.6 L1220.8 554.8 L1270.8 555.2 L1250.1 556.2 L1270.0 557.0 L1214.8 557.5 L1236.3 559.3 L1227.5 559.2 L1253.6 559.8 L1249.9 560.7 L1258.8 560.8 L1232.8 561.2 L1250.2 562.2 L1238.7 562.0 L1266.2 562.5 L1259.3 563.8 L1266.8 563.8 L1240.8 564.2 L1253.6 565.3 L1242.4 566.0 L1270.7 566.5 L1264.8 566.7 L1254.4 568.3 L1233.5 568.1 L1282.6 568.6 L1255.3 569.8 L1262.8 569.8 L1236.8 570.2 L1242.8 571.3 L1236.4 571.9 L1255.8 572.4 L1246.9 572.8 L1244.8 573.8 L1228.8 574.2 L1228.9 575.7 L1224.8 575.6 L1234.8 576.1 L1234.5 577.2 L1238.8 577.2 L1224.8 577.8 L1231.4 578.5 L1224.5 578.9 L1245.4 579.4 L1246.2 580.0 L1256.8 580.2 L1240.8 580.8 L1255.5 581.6 L1255.1 581.5 L1261.8 582.0 L1256.8 582.8 L1266.8 583.2 L1261.8 584.2 L1272.2 584.8 L1258.8 585.8 L1274.8 586.2 L1267.8 587.6 L1288.6 587.9 L1231.2 588.4 L1250.0 589.1 L1238.8 589.8 L1266.8 590.2 L1256.1 590.5 L1263.3 591.2 L1240.8 591.8 L1247.8 592.1 L1236.8 592.8 L1261.8 593.2 L1235.7 594.2 L1261.0 594.8 L1251.3 596.2 L1260.3 596.5 L1232.0 597.0 L1257.0 597.7 L1251.3 598.2 L1289.3 598.8 L1272.6 599.1 L1272.8 599.8 L1250.8 600.2 L1259.8 600.5 L1249.8 601.2 L1275.2 601.8 L1265.4 602.0 L1266.2 602.5 L1249.8 603.0 L1254.8 603.5 L1249.8 604.2 L1262.8 604.8 L1249.1 605.8 L1260.8 606.2 L1268.8 606.5 L1290.4 607.9 L1262.8 608.0 L1349.6 608.5 L1300.7 609.2 L1291.5 610.1 L1266.2 610.6 L1276.2 612.0 L1288.2 613.7 L1276.3 615.3 L1282.6 617.1 L1275.0 618.9 L1288.3 620.6 L1277.1 622.4 L1281.9 624.0 L1272.0 625.8 L1282.1 627.4 L1275.2 629.1 L1283.4 630.9 L1277.1 632.7 L1286.8 634.5 L1272.1 636.2 L1283.3 637.9 L1276.5 639.5 L1288.2 641.1 L1274.6 642.8 L1283.2 644.6 L1277.8 646.4 L1282.9 648.2 L1277.1 650.0 L1281.4 651.7 L1275.7 653.3 L1282.4 655.0 L1275.9 656.6 L1284.9 658.2 L1273.5 659.9 L1282.4 661.6 L1275.0 663.3 L1257.3 664.0 L1318.4 664.5 L1258.8 665.8 L1305.8 666.2 L1251.3 667.5 L1302.0 668.0 L1277.9 669.3 L1290.8 669.8 L1241.7 670.2 L1265.1 670.6 L1262.8 671.2 L1300.8 671.8 L1280.8 673.0 L1323.6 673.5 L1308.1 674.8 L1320.8 674.8 L1285.8 675.2 L1307.4 676.3 L1298.8 676.1 L1326.6 676.6 L1299.2 677.8 L1310.8 678.4 L1255.1 678.9 L1283.2 679.2 L1275.8 680.2 L1330.8 680.8 L1331.8 682.0 L1363.8 682.0 L1290.8 682.5 L1312.7 683.4 L1280.8 683.8 L1340.8 684.2 L1309.0 684.8 L1325.8 685.4 L1275.2 685.9 L1298.8 687.6 L1288.6 687.6 L1319.1 688.1 L1297.0 689.0 L1312.8 689.2 L1265.8 689.8 L1271.7 690.4 L1231.2 690.6 L1300.8 691.1 L1287.7 691.7 L1330.8 692.2 L1262.8 692.8 L1298.2 693.2 L1290.8 693.9 L1347.4 694.4 L1280.8 695.5 L1345.8 696.0 L1312.1 697.6 L1351.8 697.4 L1261.0 697.9 L1283.5 699.1 L1268.8 699.2 L1320.8 699.8 L1298.3 700.7 L1304.8 701.0 L1270.8 701.5 L1287.1 702.2 L1275.2 703.2 L1310.8 703.8 L1314.5 705.0 L1336.8 705.5 L1295.8 706.0 L1315.2 706.4 L1310.8 707.2 L1340.8 707.8 L1334.9 709.1 L1350.4 709.2 L1319.8 709.8" stroke="#1414e6" stroke-width="1.0"/><path d="M1191.0 262.2 L1249.2 262.2 L1255.6 262.9 L1252.7 263.6 L1255.8 263.8 L1245.2 264.2 L1244.8 265.8 L1239.6 265.8 L1252.9 266.2 L1241.7 268.1 L1250.0 268.9 L1223.0 269.4 L1242.2 270.4 L1240.9 270.8 L1253.6 271.2 L1248.2 272.7 L1255.2 273.8 L1243.6 274.2 L1248.6 275.1 L1246.3 276.4 L1257.0 276.9 L1250.4 277.2 L1246.2 279.4 L1239.4 279.8 L1250.6 280.2 L1245.5 281.8 L1247.7 283.8 L1238.6 284.2 L1240.4 286.2 L1237.4 286.8 L1247.1 287.2 L1244.8 288.7 L1244.8 291.0 L1240.4 291.2 L1253.5 291.8 L1247.8 293.4 L1246.9 295.7 L1241.9 295.8 L1253.1 296.2 L1248.1 298.0 L1250.4 299.8 L1240.3 300.2 L1244.6 302.6 L1250.0 305.0 L1253.3 304.8 L1241.6 305.2 L1246.9 307.3 L1250.8 309.6 L1252.6 311.4 L1241.6 311.9 L1245.5 314.2 L1239.4 315.8 L1250.4 316.2 L1244.6 316.5 L1242.5 318.9 L1238.2 319.8 L1250.1 320.2 L1246.6 321.1 L1255.1 322.6 L1240.8 323.1 L1247.9 324.1 L1234.6 324.6 L1240.0 325.7 L1243.6 328.0 L1246.8 327.8 L1239.3 328.2 L1242.6 330.3 L1239.4 331.8 L1246.9 332.2 L1244.2 332.7 L1243.2 335.1 L1241.1 335.8 L1247.3 336.2 L1243.6 337.5 L1243.4 339.8 L1242.4 339.8 L1246.3 340.2 L1244.6 342.2 L1244.8 344.5 L1241.8 345.1 L1250.5 345.6 L1246.0 346.9 L1241.1 349.3 L1239.8 349.8 L1245.6 350.2 L1243.5 351.5 L1241.1 353.7 L1238.6 353.8 L1245.2 354.2 L1240.9 355.9 L1243.9 356.8 L1227.9 357.2 L1235.8 358.4 L1237.7 359.8 L1243.8 360.2 L1242.6 360.6 L1239.1 363.0 L1236.1 362.8 L1246.7 363.2 L1234.8 364.9 L1254.2 365.4 L1249.0 367.5 L1250.9 367.8 L1242.4 368.2 L1246.5 369.8 L1245.6 370.8 L1250.1 371.2 L1249.2 372.0 L1249.2 374.4 L1247.6 374.2 L1250.0 374.8 L1251.3 376.7 L1249.2 379.1 L1243.7 379.4 L1256.4 379.9 L1252.9 381.4 L1254.7 382.8 L1248.6 383.2 L1249.9 383.9 L1251.0 386.3 L1253.8 386.2 L1247.7 386.8 L1245.3 388.7 L1242.6 389.1 L1248.8 389.6 L1244.9 391.1 L1241.5 392.4 L1238.4 393.6 L1247.2 394.1 L1241.1 395.6 L1245.8 396.2 L1236.3 396.8 L1238.4 397.2 L1237.1 398.6 L1241.7 399.2 L1224.5 399.8 L1235.1 400.1 L1247.0 401.5 L1252.2 401.8 L1235.5 402.2 L1241.3 403.1 L1240.1 404.2 L1250.2 404.8 L1248.2 405.9 L1251.9 406.2 L1238.4 406.8 L1236.5 407.2 L1227.4 407.2 L1243.5 407.8 L1233.8 408.8 L1239.1 409.8 L1223.8 410.2 L1232.2 411.7 L1230.8 411.8 L1241.7 412.2 L1238.4 413.2 L1243.2 413.8 L1230.5 414.2 L1234.0 414.7 L1241.9 416.0 L1246.7 416.2 L1231.7 416.8 L1237.6 417.4 L1233.2 418.1 L1248.0 418.6 L1245.5 418.9 L1241.1 420.5 L1236.4 420.8 L1247.4 421.2 L1243.3 421.8 L1242.8 423.3 L1239.3 423.4 L1249.3 423.9 L1245.9 424.6 L1247.9 425.8 L1240.2 426.2 L1244.7 427.5 L1239.2 428.6 L1250.9 429.1 L1248.0 430.1 L1260.4 430.6 L1252.1 431.8 L1262.0 432.2 L1253.6 433.4 L1269.3 433.9 L1259.7 435.1 L1262.6 435.2 L1253.6 435.8 L1257.8 436.4 L1254.6 436.8 L1264.8 437.2 L1261.0 437.9 L1269.3 437.9 L1251.6 438.4 L1250.8 439.2 L1241.3 439.8 L1256.0 440.2 L1248.1 440.6 L1251.1 441.2 L1239.6 441.8 L1244.8 442.0 L1242.5 442.8 L1251.7 443.2 L1250.1 443.5 L1246.9 444.9 L1244.5 444.8 L1254.2 445.2 L1251.2 446.2 L1258.3 446.1 L1241.3 446.6 L1246.7 447.1 L1216.6 447.6 L1253.3 448.4 L1228.9 448.9 L1239.1 449.1 L1236.3 449.4 L1260.1 449.9 L1246.1 450.7 L1244.0 451.4 L1230.9 451.9 L1233.2 452.3 L1232.8 453.2 L1240.7 453.8 L1233.9 455.1 L1238.2 455.4 L1223.9 455.9 L1234.2 456.6 L1230.4 456.9 L1243.2 457.4 L1237.0 458.1 L1238.3 458.8 L1221.6 459.2 L1229.2 459.6 L1228.9 460.6 L1238.8 461.1 L1231.4 462.2 L1239.2 462.8 L1263.3 464.1 L1308.8 465.1 L1238.8 465.6 L1245.3 467.0 L1234.1 468.1 L1237.8 468.6 L1236.4 469.9 L1240.0 469.8 L1230.7 470.2 L1231.4 471.2 L1227.1 471.8 L1236.5 472.2 L1232.6 472.8 L1225.2 474.3 L1215.0 474.8 L1234.9 475.2 L1232.4 475.8 L1243.4 475.8 L1225.3 476.2 L1230.8 477.1 L1230.8 477.8 L1242.0 478.2 L1231.5 479.2 L1245.5 479.8 L1242.7 481.3 L1245.7 481.2 L1232.8 481.8 L1247.8 482.8 L1235.2 482.9 L1272.1 483.4 L1249.7 484.2 L1258.3 484.4 L1230.2 484.9 L1229.2 485.6 L1212.8 485.9 L1239.3 486.4 L1235.3 487.1 L1247.3 487.2 L1223.9 487.8 L1236.5 488.5 L1229.7 488.9 L1248.9 489.4 L1241.6 490.0 L1235.4 491.4 L1227.6 491.4 L1253.0 491.9 L1241.2 492.9 L1246.1 493.8 L1231.3 494.2 L1235.7 495.7 L1231.4 495.9 L1239.5 496.4 L1237.3 497.1 L1237.1 498.2 L1226.1 498.8 L1227.1 500.1 L1221.8 500.4 L1235.5 500.9 L1230.9 501.5 L1226.0 503.0 L1222.8 503.4 L1235.6 503.9 L1230.3 504.4 L1226.2 505.8 L1220.5 505.8 L1237.3 506.2 L1231.7 507.2 L1228.3 508.6 L1216.0 508.6 L1242.9 509.1 L1233.2 510.1 L1242.2 510.2 L1225.6 510.8 L1232.7 511.5 L1229.0 512.4 L1242.3 512.9 L1240.9 514.3 L1248.0 514.2 L1228.1 514.8 L1231.6 515.9 L1216.0 515.8 L1260.2 516.2 L1247.0 517.2 L1255.1 517.8 L1228.7 518.2 L1242.3 518.6 L1232.8 519.8 L1258.4 520.2 L1247.5 521.6 L1251.9 521.8 L1232.8 522.2 L1238.1 522.9 L1239.1 524.5 L1245.0 524.2 L1231.1 524.8 L1230.9 525.8 L1221.7 526.8 L1242.7 527.2 L1234.1 528.6 L1251.3 529.5 L1199.8 530.0 L1228.4 531.5 L1216.1 531.2 L1246.9 531.8 L1235.6 532.9 L1243.2 533.2 L1215.6 533.8 L1222.4 534.3 L1216.2 535.4 L1241.9 535.9 L1217.5 536.8 L1237.7 537.2 L1216.1 538.4 L1228.7 538.9 L1219.8 539.8 L1243.4 540.2 L1221.5 541.0 L1250.0 541.5 L1222.8 542.8 L1251.6 543.2 L1216.5 544.4 L1261.2 544.9 L1222.2 545.8 L1259.7 546.2 L1251.9 547.4 L1260.5 547.4 L1224.7 547.9 L1234.9 548.8 L1223.8 548.8 L1266.9 549.2 L1221.4 549.8 L1271.8 550.2 L1223.2 551.2 L1271.5 551.8 L1215.5 552.8 L1278.8 553.2 L1249.2 554.7 L1267.1 554.8 L1221.4 555.2 L1231.2 556.0 L1215.5 557.0 L1265.6 557.5 L1243.2 558.9 L1250.6 559.2 L1227.7 559.8 L1236.3 560.4 L1231.6 560.8 L1256.0 561.2 L1251.2 562.0 L1262.5 562.0 L1239.4 562.5 L1249.3 563.4 L1240.2 563.8 L1265.0 564.2 L1259.0 564.7 L1247.2 566.1 L1240.5 566.0 L1267.4 566.5 L1261.7 567.6 L1278.5 568.1 L1232.3 568.6 L1245.3 569.0 L1235.2 569.8 L1261.7 570.2 L1246.9 571.9 L1254.2 571.9 L1234.2 572.4 L1234.3 573.3 L1228.8 573.8 L1241.4 574.2 L1234.8 574.7 L1232.5 575.6 L1222.4 576.1 L1236.1 577.2 L1225.1 577.8 L1230.5 578.9 L1223.2 578.9 L1244.3 579.4 L1238.5 580.2 L1253.7 580.8 L1255.1 581.5 L1261.5 582.0 L1256.9 582.8 L1264.2 583.2 L1264.6 583.7 L1269.7 584.2 L1261.1 584.8 L1261.8 585.1 L1258.6 585.8 L1272.9 586.2 L1266.8 586.7 L1286.0 587.9 L1231.7 588.4 L1244.6 589.6 L1239.2 589.8 L1263.3 590.2 L1253.6 591.2 L1260.0 591.2 L1239.3 591.8 L1244.9 592.7 L1237.1 592.8 L1258.2 593.2 L1252.2 594.2 L1259.1 594.2 L1236.4 594.8 L1244.3 595.7 L1231.5 596.5 L1257.5 597.0 L1271.8 598.5 L1286.0 598.2 L1251.0 598.8 L1256.9 599.8 L1251.4 599.8 L1271.7 600.2 L1264.2 601.1 L1272.1 601.2 L1250.4 601.8 L1252.8 602.6 L1248.3 602.5 L1264.4 603.0 L1257.6 604.0 L1260.8 604.2 L1248.6 604.8 L1253.3 605.5 L1247.8 605.8 L1259.1 606.2 L1281.2 606.9 L1343.7 608.0 L1265.0 608.5 L1274.9 609.9 L1265.1 610.1 L1288.2 610.6 L1279.6 611.5 L1271.2 612.0 L1278.3 613.3 L1266.2 615.1 L1276.5 616.9 L1271.7 618.4 L1276.8 620.2 L1264.9 621.8 L1282.2 623.5 L1270.7 625.2 L1280.9 626.9 L1266.1 628.6 L1280.6 630.4 L1272.3 632.1 L1280.2 633.8 L1269.2 635.4 L1279.9 637.2 L1272.4 638.9 L1277.1 640.7 L1265.6 642.4 L1277.6 644.0 L1266.8 645.7 L1279.5 647.5 L1270.6 649.1 L1275.5 650.9 L1269.8 652.7 L1278.0 654.5 L1271.6 656.3 L1280.0 657.8 L1265.5 659.6 L1279.9 661.4 L1270.5 662.9 L1258.9 664.0 L1315.4 664.5 L1286.8 665.7 L1301.6 665.8 L1258.3 666.2 L1267.7 667.2 L1252.7 667.5 L1297.6 668.0 L1276.0 668.6 L1286.1 669.8 L1240.9 670.2 L1297.5 671.2 L1262.5 671.8 L1294.4 672.9 L1280.4 673.0 L1320.2 673.5 L1304.0 674.2 L1317.5 674.8 L1286.0 675.2 L1300.0 675.5 L1298.3 676.1 L1323.3 676.6 L1295.3 678.2 L1306.3 678.4 L1255.7 678.9 L1286.1 679.8 L1276.4 680.2 L1327.7 680.8 L1324.7 681.3 L1359.7 682.0 L1292.8 682.5 L1336.4 683.8 L1281.5 684.2 L1296.0 685.5 L1276.3 685.4 L1323.9 685.9 L1306.9 686.9 L1317.0 687.6 L1287.2 688.1 L1310.2 689.2 L1265.4 689.8 L1295.6 690.6 L1232.2 691.1 L1327.8 692.2 L1263.7 692.8 L1304.8 694.0 L1291.0 693.9 L1343.8 694.4 L1319.0 695.4 L1342.6 695.5 L1280.3 696.0 L1291.2 696.8 L1263.7 697.4 L1347.2 697.9 L1316.5 698.2 L1315.9 699.2 L1268.4 699.8 L1283.4 701.2 L1270.3 701.0 L1302.2 701.5 L1294.4 702.5 L1306.8 703.2 L1274.5 703.8 L1302.7 705.3 L1294.7 705.5 L1333.4 706.0 L1325.0 706.7 L1336.8 707.2 L1309.1 707.8 L1323.2 708.3 L1318.3 709.2 L1346.5 709.8" stroke="#2a0a9a" stroke-width="0.9" opacity="0.9"/><path d="M1191.0 262.2 L1247.6 262.2 L1254.9 262.9 L1251.1 263.6 L1253.5 263.8 L1246.2 264.2 L1243.9 265.9 L1239.7 265.8 L1251.1 266.2 L1243.2 268.0 L1248.6 268.9 L1224.2 269.4 L1239.9 270.4 L1240.8 270.8 L1251.9 271.2 L1245.8 272.6 L1251.2 273.8 L1240.0 274.2 L1244.8 274.9 L1246.1 276.4 L1253.3 276.9 L1250.4 277.1 L1246.5 279.3 L1241.5 279.8 L1249.3 280.2 L1247.0 281.6 L1239.2 283.8 L1235.9 283.8 L1245.2 284.2 L1241.1 286.0 L1244.3 286.8 L1235.3 287.2 L1237.7 288.2 L1244.5 290.4 L1251.9 291.2 L1240.2 291.8 L1242.8 292.7 L1246.4 295.1 L1252.2 295.8 L1241.4 296.2 L1245.1 297.2 L1246.9 299.5 L1246.7 299.8 L1237.8 300.2 L1244.6 301.8 L1248.7 304.2 L1251.9 304.8 L1240.1 305.2 L1244.4 306.6 L1248.6 308.8 L1243.8 311.3 L1240.5 311.4 L1249.9 311.9 L1244.2 313.4 L1240.6 315.9 L1237.7 315.8 L1247.5 316.2 L1241.8 318.1 L1244.5 319.8 L1235.5 320.2 L1244.8 322.5 L1239.1 322.6 L1254.1 323.1 L1233.0 324.1 L1247.4 324.6 L1243.2 327.1 L1245.7 327.8 L1237.1 328.2 L1241.9 329.3 L1243.3 331.6 L1243.3 331.8 L1237.8 332.2 L1239.2 334.0 L1240.0 335.8 L1243.2 336.2 L1241.6 338.6 L1245.9 339.8 L1241.7 340.2 L1241.2 340.7 L1243.3 342.9 L1242.6 345.1 L1241.4 345.1 L1246.4 345.6 L1244.1 347.4 L1239.5 349.7 L1239.0 349.8 L1242.9 350.2 L1240.3 352.0 L1242.5 353.8 L1236.5 354.2 L1232.5 356.6 L1227.3 356.8 L1242.3 357.2 L1240.1 358.8 L1244.4 359.8 L1236.4 360.2 L1236.5 361.2 L1233.3 362.8 L1244.4 363.2 L1241.3 363.6 L1251.5 364.9 L1236.6 365.4 L1243.6 365.8 L1242.4 367.8 L1248.9 368.2 L1248.9 370.4 L1250.7 370.8 L1244.6 371.2 L1247.3 372.8 L1243.0 374.2 L1247.5 374.8 L1247.1 375.2 L1247.2 377.4 L1244.2 379.4 L1255.1 379.9 L1251.0 382.1 L1252.2 382.8 L1247.2 383.2 L1248.3 384.4 L1245.9 386.2 L1249.3 386.8 L1245.1 388.9 L1248.1 389.1 L1242.3 389.6 L1241.2 391.2 L1243.6 392.5 L1242.7 393.6 L1236.9 394.1 L1236.2 395.6 L1233.7 396.2 L1242.9 396.8 L1236.4 397.0 L1232.2 398.6 L1223.0 399.2 L1239.8 399.8 L1241.2 401.5 L1248.5 401.8 L1236.6 402.2 L1244.2 403.0 L1246.9 404.4 L1247.6 404.2 L1238.4 404.8 L1242.8 405.9 L1237.3 406.2 L1249.4 406.8 L1236.7 407.4 L1241.2 407.2 L1228.0 407.8 L1231.3 409.0 L1224.6 409.8 L1236.3 410.2 L1234.1 412.0 L1239.5 411.8 L1228.6 412.2 L1232.9 413.3 L1231.2 413.8 L1239.8 414.2 L1238.6 414.8 L1236.4 416.3 L1231.0 416.2 L1242.7 416.8 L1242.0 417.9 L1245.5 418.1 L1231.3 418.6 L1237.6 419.4 L1243.6 420.8 L1245.5 420.8 L1235.6 421.2 L1240.4 422.2 L1240.5 423.4 L1248.4 423.9 L1245.5 425.0 L1247.2 425.8 L1241.2 426.2 L1241.6 427.8 L1238.6 428.6 L1249.5 429.1 L1247.4 430.1 L1258.0 430.6 L1250.9 431.8 L1262.2 432.2 L1260.2 433.4 L1268.6 433.4 L1251.6 433.9 L1257.4 434.7 L1252.6 435.2 L1260.9 435.8 L1257.3 436.1 L1264.2 436.8 L1253.5 437.2 L1255.5 437.7 L1253.2 437.9 L1266.2 438.4 L1252.8 439.0 L1250.7 439.8 L1241.0 440.2 L1247.5 441.2 L1238.4 441.8 L1251.7 442.8 L1241.3 443.2 L1251.4 444.8 L1243.6 445.2 L1255.4 446.1 L1239.0 446.6 L1244.0 447.1 L1217.7 447.6 L1228.4 448.0 L1228.4 448.4 L1251.1 448.9 L1248.1 449.4 L1256.7 449.4 L1234.1 449.9 L1235.3 450.8 L1230.4 451.4 L1242.0 451.9 L1234.7 452.4 L1239.7 453.2 L1232.2 453.8 L1228.4 455.3 L1225.3 455.4 L1237.7 455.9 L1236.2 456.7 L1238.6 456.9 L1227.1 457.4 L1228.9 458.0 L1222.3 458.8 L1236.7 459.2 L1234.8 460.9 L1238.6 460.6 L1226.9 461.1 L1231.8 462.3 L1228.7 462.2 L1235.2 462.8 L1255.7 463.7 L1258.0 465.0 L1242.5 465.1 L1302.2 465.6 L1259.9 466.4 L1236.6 467.8 L1233.1 468.1 L1238.7 468.6 L1233.4 469.3 L1237.7 469.8 L1230.4 470.2 L1229.2 470.9 L1227.2 471.8 L1234.4 472.2 L1229.6 473.9 L1229.9 474.8 L1214.4 475.2 L1240.1 475.8 L1223.7 476.2 L1230.9 476.9 L1231.5 477.8 L1239.7 478.2 L1229.9 479.2 L1244.1 479.8 L1239.9 481.3 L1245.3 481.2 L1231.8 481.8 L1245.4 482.8 L1235.6 482.9 L1265.9 483.4 L1251.8 484.4 L1255.2 484.4 L1228.9 484.9 L1227.2 485.8 L1210.0 485.9 L1233.1 486.4 L1237.2 487.2 L1245.6 487.2 L1225.8 487.8 L1235.5 488.5 L1231.0 488.9 L1247.4 489.4 L1240.0 490.0 L1235.8 491.3 L1224.8 491.4 L1249.0 491.9 L1239.9 492.7 L1241.4 493.8 L1232.6 494.2 L1233.6 495.4 L1230.7 495.9 L1236.6 496.4 L1234.8 496.8 L1226.7 498.1 L1221.9 498.2 L1233.9 498.8 L1229.6 499.4 L1229.9 500.4 L1217.6 500.9 L1225.2 502.1 L1228.5 503.5 L1232.8 503.4 L1224.2 503.9 L1225.9 504.8 L1219.9 505.8 L1232.1 506.2 L1233.4 507.8 L1238.6 508.6 L1218.7 509.1 L1238.8 510.2 L1223.1 510.8 L1234.1 512.0 L1227.6 512.4 L1240.5 512.9 L1237.8 513.4 L1246.7 514.2 L1228.9 514.8 L1256.2 515.8 L1217.3 516.2 L1238.4 517.9 L1229.7 517.8 L1254.2 518.2 L1246.9 519.3 L1254.3 519.8 L1232.8 520.2 L1239.6 520.7 L1233.5 521.8 L1249.5 522.2 L1239.5 523.4 L1243.5 524.2 L1228.7 524.8 L1231.8 526.2 L1221.4 526.8 L1241.0 527.2 L1235.6 527.7 L1216.4 529.1 L1199.8 529.5 L1245.7 530.0 L1229.1 530.4 L1241.5 531.2 L1214.5 531.8 L1224.2 533.4 L1215.6 533.2 L1240.4 533.8 L1230.8 534.8 L1239.5 535.4 L1216.3 535.9 L1223.7 536.2 L1217.9 536.8 L1235.2 537.2 L1224.7 537.5 L1224.6 538.4 L1212.7 538.9 L1240.9 539.8 L1221.8 540.2 L1228.5 540.6 L1222.3 541.0 L1246.7 541.5 L1238.3 542.1 L1247.4 542.8 L1222.7 543.2 L1232.4 543.7 L1216.2 544.4 L1256.1 544.9 L1223.7 545.8 L1256.6 546.2 L1224.8 547.4 L1255.3 547.9 L1223.1 548.8 L1262.1 549.2 L1221.3 549.8 L1267.6 550.2 L1253.0 550.8 L1265.2 551.2 L1222.4 551.8 L1236.6 552.3 L1216.0 552.8 L1272.5 553.2 L1250.2 553.7 L1264.8 554.8 L1221.5 555.2 L1234.3 556.6 L1216.4 557.0 L1263.3 557.5 L1242.1 558.2 L1247.0 559.2 L1227.4 559.8 L1254.7 560.8 L1230.1 561.2 L1261.8 562.0 L1237.8 562.5 L1247.0 562.9 L1238.4 563.8 L1259.2 564.2 L1258.6 565.8 L1265.3 566.0 L1240.1 566.5 L1251.3 567.2 L1233.9 568.1 L1275.0 568.6 L1249.9 569.9 L1259.3 569.8 L1237.3 570.2 L1238.7 571.2 L1236.8 571.9 L1251.0 572.4 L1242.6 572.6 L1240.8 573.8 L1228.7 574.2 L1238.9 573.8 L1228.2 574.2 L1227.1 575.5 L1224.0 575.6 L1232.2 576.1 L1228.2 577.1 L1233.9 577.2 L1222.9 577.8 L1226.2 578.5 L1224.6 578.9 L1238.6 579.4 L1243.3 580.1 L1250.8 580.2 L1240.2 580.8 L1253.9 581.7 L1251.7 581.5 L1257.6 582.0 L1254.8 582.8 L1262.4 583.2 L1260.2 584.2 L1267.9 584.8 L1256.6 585.8 L1268.2 586.2 L1262.6 587.4 L1281.5 587.9 L1234.3 588.4 L1247.9 588.8 L1236.4 589.8 L1259.4 590.2 L1239.2 591.2 L1256.4 591.8 L1235.6 592.8 L1256.4 593.2 L1233.0 594.2 L1255.9 594.8 L1248.2 596.2 L1252.8 596.5 L1231.2 597.0 L1249.7 597.7 L1250.2 598.2 L1284.0 598.8 L1269.5 599.2 L1269.4 599.8 L1248.5 600.2 L1255.0 600.6 L1247.7 601.2 L1270.7 601.8 L1258.9 602.1 L1260.3 602.5 L1249.0 603.0 L1252.2 603.6 L1246.3 604.2 L1258.3 604.8 L1253.6 605.2 L1255.8 605.8 L1246.9 606.2 L1264.1 606.7 L1319.0 608.1 L1339.6 608.0 L1266.2 608.5 L1278.5 609.5 L1264.9 610.1 L1287.5 610.6 L1279.0 611.0 L1254.7 612.0 L1265.6 612.7 L1259.3 614.5 L1264.5 616.3 L1255.1 618.0 L1270.6 619.7 L1258.5 621.5 L1261.9 623.3 L1256.9 624.9 L1264.1 626.5 L1259.7 628.0 L1264.1 629.9 L1255.1 631.7 L1266.5 633.2 L1258.0 635.0 L1265.8 636.9 L1258.9 638.6 L1265.6 640.3 L1255.7 642.0 L1269.9 643.6 L1260.0 645.2 L1264.4 647.0 L1259.5 648.7 L1265.3 650.5 L1255.7 652.3 L1265.3 654.0 L1259.0 655.8 L1269.4 657.6 L1253.2 659.2 L1267.0 660.8 L1271.7 662.5 L1290.2 663.8 L1311.2 664.0 L1260.5 664.5 L1274.6 665.3 L1259.7 665.8 L1299.5 666.2 L1283.4 666.7 L1293.3 667.5 L1254.4 668.0 L1261.6 669.4 L1242.0 669.8 L1284.1 670.2 L1278.9 671.0 L1293.6 671.2 L1264.5 671.8 L1283.1 672.4 L1282.3 673.0 L1317.3 673.5 L1307.1 673.9 L1316.0 674.8 L1286.7 675.2 L1321.8 676.1 L1297.9 676.6 L1300.0 676.9 L1292.2 678.3 L1300.6 678.4 L1255.3 678.9 L1288.0 679.9 L1275.9 680.2 L1320.6 680.8 L1321.2 681.4 L1355.1 682.0 L1295.1 682.5 L1310.6 682.8 L1284.4 683.8 L1333.6 684.2 L1306.0 685.6 L1320.0 685.4 L1278.4 685.9 L1295.5 687.0 L1286.4 687.6 L1314.4 688.1 L1268.1 689.2 L1306.0 689.8 L1235.6 690.6 L1292.0 691.1 L1264.7 692.2 L1319.8 692.8 L1318.7 694.0 L1338.7 693.9 L1291.9 694.4 L1303.9 695.5 L1284.3 695.5 L1336.3 696.0 L1316.7 697.0 L1341.0 697.4 L1267.4 697.9 L1288.6 698.4 L1271.3 699.2 L1312.4 699.8 L1271.5 701.0 L1298.8 701.5 L1269.7 701.0 L1299.9 701.5 L1290.7 702.8 L1303.0 703.2 L1273.1 703.8 L1296.9 704.2 L1319.4 705.6 L1329.8 705.5 L1295.0 706.0 L1317.5 707.0 L1312.0 707.2 L1334.2 707.8 L1330.5 708.4 L1344.8 709.2 L1317.8 709.8" stroke="#6a1a98" stroke-width="0.9" opacity="0.82"/></svg>
</div></body></html>
